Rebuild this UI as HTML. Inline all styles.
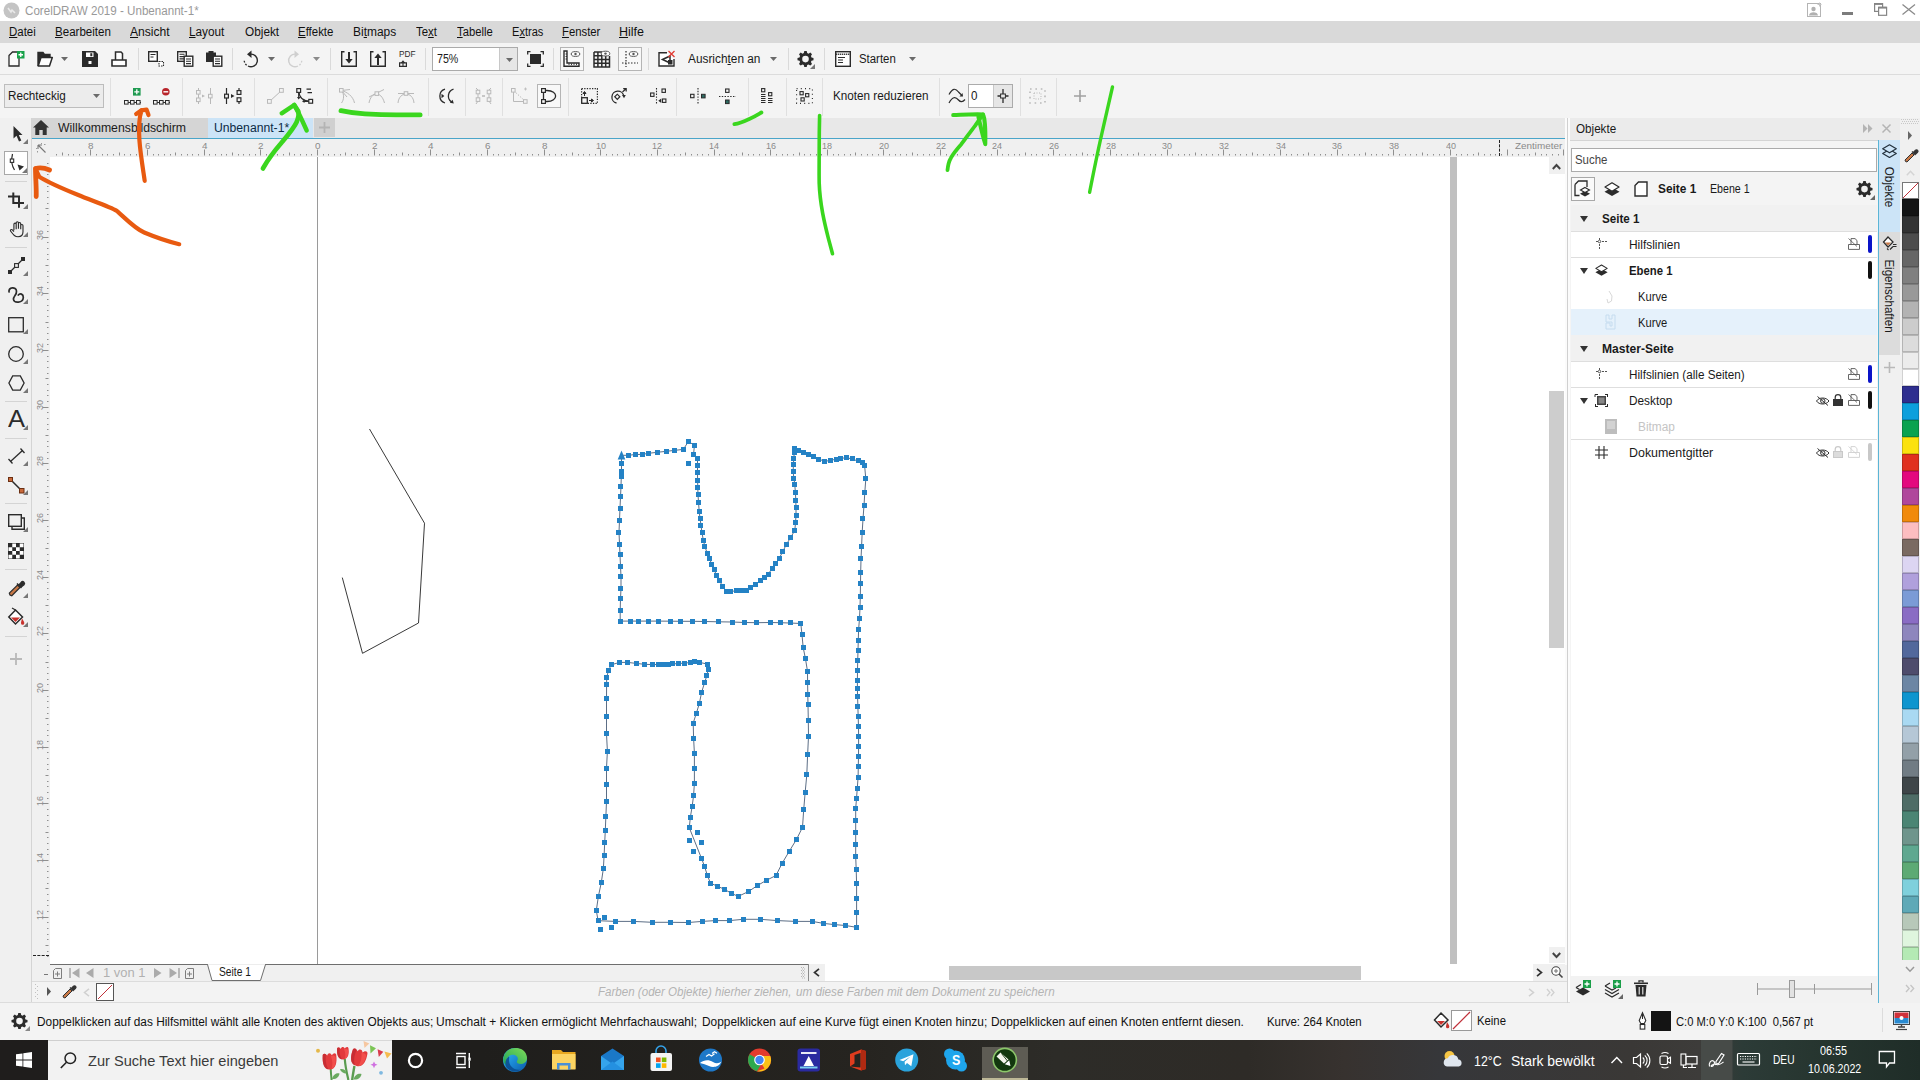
<!DOCTYPE html><html><head><meta charset="utf-8"><title>CorelDRAW 2019 - Unbenannt-1*</title><style>html,body{margin:0;padding:0;}body{width:1920px;height:1080px;overflow:hidden;position:relative;background:#f0f0f0;font-family:"Liberation Sans",sans-serif;}.a{position:absolute;}.t{position:absolute;white-space:nowrap;transform-origin:0 50%;line-height:1;}svg{position:absolute;overflow:visible;}</style></head><body>
<div class="a" style="left:0px;top:0px;width:1920px;height:21px;background:#ffffff;"></div>
<div class="a" style="left:0px;top:21px;width:1920px;height:22px;background:#d9d9d9;"></div>
<div class="a" style="left:0px;top:43px;width:1920px;height:31px;background:#f4f4f4;"></div>
<div class="a" style="left:0px;top:74px;width:1920px;height:1px;background:#dcdcdc;"></div>
<div class="a" style="left:0px;top:75px;width:1920px;height:43px;background:#f4f4f4;"></div>
<div class="a" style="left:138px;top:48px;width:1px;height:22px;background:#dadada;"></div>
<div class="a" style="left:232px;top:48px;width:1px;height:22px;background:#dadada;"></div>
<div class="a" style="left:330px;top:48px;width:1px;height:22px;background:#dadada;"></div>
<div class="a" style="left:425px;top:48px;width:1px;height:22px;background:#dadada;"></div>
<div class="a" style="left:553px;top:48px;width:1px;height:22px;background:#dadada;"></div>
<div class="a" style="left:648px;top:48px;width:1px;height:22px;background:#dadada;"></div>
<div class="a" style="left:788px;top:48px;width:1px;height:22px;background:#dadada;"></div>
<div class="a" style="left:824px;top:48px;width:1px;height:22px;background:#dadada;"></div>
<div class="a" style="left:110px;top:78px;width:1px;height:38px;background:#e0e0e0;"></div>
<div class="a" style="left:182px;top:78px;width:1px;height:38px;background:#e0e0e0;"></div>
<div class="a" style="left:254px;top:78px;width:1px;height:38px;background:#e0e0e0;"></div>
<div class="a" style="left:327px;top:78px;width:1px;height:38px;background:#e0e0e0;"></div>
<div class="a" style="left:428px;top:78px;width:1px;height:38px;background:#e0e0e0;"></div>
<div class="a" style="left:465px;top:78px;width:1px;height:38px;background:#e0e0e0;"></div>
<div class="a" style="left:502px;top:78px;width:1px;height:38px;background:#e0e0e0;"></div>
<div class="a" style="left:568px;top:78px;width:1px;height:38px;background:#e0e0e0;"></div>
<div class="a" style="left:676px;top:78px;width:1px;height:38px;background:#e0e0e0;"></div>
<div class="a" style="left:748px;top:78px;width:1px;height:38px;background:#e0e0e0;"></div>
<div class="a" style="left:786px;top:78px;width:1px;height:38px;background:#e0e0e0;"></div>
<div class="a" style="left:822px;top:78px;width:1px;height:38px;background:#e0e0e0;"></div>
<div class="a" style="left:939px;top:78px;width:1px;height:38px;background:#e0e0e0;"></div>
<div class="a" style="left:1020px;top:78px;width:1px;height:38px;background:#e0e0e0;"></div>
<div class="a" style="left:1056px;top:78px;width:1px;height:38px;background:#e0e0e0;"></div>
<div class="a" style="left:432px;top:47px;width:86px;height:24px;background:#ffffff;border:1px solid #ababab;box-sizing:border-box;"></div>
<div class="a" style="left:500px;top:48px;width:17px;height:22px;background:#e6e6e6;"></div>
<div class="a" style="left:499px;top:48px;width:1px;height:22px;background:#c8c8c8;"></div>
<div class="a" style="left:560px;top:47px;width:24px;height:24px;background:#f8f8f8;border:1px solid #b5b5b5;box-sizing:border-box;"></div>
<div class="a" style="left:618px;top:47px;width:24px;height:24px;background:#f8f8f8;border:1px solid #b5b5b5;box-sizing:border-box;"></div>
<div class="a" style="left:4px;top:84px;width:100px;height:24px;background:#ececec;border:1px solid #bdbdbd;box-sizing:border-box;"></div>
<div class="a" style="left:537px;top:84px;width:24px;height:24px;background:#f8f8f8;border:1px solid #b5b5b5;box-sizing:border-box;"></div>
<div class="a" style="left:968px;top:84px;width:45px;height:24px;background:#ffffff;border:1px solid #ababab;box-sizing:border-box;"></div>
<div class="a" style="left:994px;top:85px;width:18px;height:22px;background:#e6e6e6;"></div>
<div class="a" style="left:993px;top:85px;width:1px;height:22px;background:#c8c8c8;"></div>
<div class="a" style="left:0px;top:118px;width:31px;height:885px;background:#f0f0f0;"></div>
<div class="a" style="left:31px;top:118px;width:1px;height:885px;background:#d4d4d4;"></div>
<div class="a" style="left:4px;top:151px;width:24px;height:24px;background:#ffffff;border:1px solid #a8a8a8;box-sizing:border-box;"></div>
<div class="a" style="left:5px;top:181px;width:22px;height:1px;background:#d4d4d4;"></div>
<div class="a" style="left:5px;top:247px;width:22px;height:1px;background:#d4d4d4;"></div>
<div class="a" style="left:5px;top:401px;width:22px;height:1px;background:#d4d4d4;"></div>
<div class="a" style="left:5px;top:438px;width:22px;height:1px;background:#d4d4d4;"></div>
<div class="a" style="left:5px;top:503px;width:22px;height:1px;background:#d4d4d4;"></div>
<div class="a" style="left:5px;top:569px;width:22px;height:1px;background:#d4d4d4;"></div>
<div class="a" style="left:5px;top:636px;width:22px;height:1px;background:#d4d4d4;"></div>
<div class="a" style="left:32px;top:118px;width:1536px;height:20px;background:#e8e8e8;"></div>
<div class="a" style="left:32px;top:118px;width:176px;height:20px;background:#d5d5d5;"></div>
<div class="a" style="left:208px;top:118px;width:105px;height:20px;background:#cce4f7;"></div>
<div class="a" style="left:314px;top:118px;width:21px;height:19px;background:#d0d0d0;"></div>
<div class="a" style="left:32px;top:138px;width:1536px;height:1px;background:#4aa5c9;"></div>
<div class="a" style="left:32px;top:139px;width:1536px;height:18px;background:#f0f0f0;"></div>
<div class="a" style="left:32px;top:157px;width:18px;height:808px;background:#f0f0f0;"></div>
<div class="a" style="left:50px;top:157px;width:1499px;height:807px;background:#ffffff;"></div>
<div class="a" style="left:1549px;top:157px;width:17px;height:808px;background:#ffffff;"></div>
<div class="a" style="left:1549px;top:157px;width:16px;height:17px;background:#f0f0f0;"></div>
<div class="a" style="left:1549px;top:947px;width:16px;height:16px;background:#f0f0f0;"></div>
<div class="a" style="left:1549px;top:391px;width:15px;height:257px;background:#cdcdcd;"></div>
<div class="a" style="left:1565px;top:118px;width:6px;height:885px;background:#fbfbfb;"></div>
<div class="a" style="left:317px;top:157px;width:1px;height:807px;background:#9a9a9a;"></div>
<div class="a" style="left:1450px;top:157px;width:7px;height:807px;background:#c0c0c0;"></div>
<div class="a" style="left:32px;top:965px;width:1536px;height:16px;background:#f0f0f0;"></div>
<div class="a" style="left:50px;top:964px;width:759px;height:1px;background:#6e6e6e;"></div>
<div class="a" style="left:808px;top:964px;width:1px;height:17px;background:#8a8a8a;"></div>
<div class="a" style="left:809px;top:964px;width:16px;height:17px;background:#f0f0f0;"></div>
<div class="a" style="left:825px;top:964px;width:708px;height:17px;background:#ffffff;"></div>
<div class="a" style="left:949px;top:966px;width:412px;height:14px;background:#c8c8c8;"></div>
<div class="a" style="left:1533px;top:964px;width:32px;height:17px;background:#f0f0f0;"></div>
<div class="a" style="left:32px;top:981px;width:1536px;height:22px;background:#f3f3f3;"></div>
<div class="a" style="left:32px;top:981px;width:1536px;height:1px;background:#dcdcdc;"></div>
<div class="a" style="left:96px;top:983px;width:18px;height:18px;background:#ffffff;border:1px solid #555;box-sizing:border-box;"></div>
<div class="a" style="left:0px;top:1003px;width:1920px;height:37px;background:#f3f3f3;"></div>
<div class="a" style="left:0px;top:1002px;width:1920px;height:1px;background:#dcdcdc;"></div>
<div class="a" style="left:1651px;top:1011px;width:20px;height:20px;background:#141414;"></div>
<div class="a" style="left:1451px;top:1010px;width:21px;height:21px;background:#ffffff;border:1px solid #999;box-sizing:border-box;"></div>
<div class="a" style="left:1882px;top:1008px;width:1px;height:24px;background:#dcdcdc;"></div>
<div class="a" style="left:1570px;top:118px;width:330px;height:22px;background:#ebebeb;"></div>
<div class="a" style="left:1570px;top:140px;width:308px;height:1px;background:#d4d4d4;"></div>
<div class="a" style="left:1567px;top:118px;width:1px;height:885px;background:#d0d0d0;"></div>
<div class="a" style="left:1570px;top:141px;width:308px;height:862px;background:#f4f4f4;"></div>
<div class="a" style="left:1571px;top:148px;width:306px;height:24px;background:#ffffff;border:1px solid #ababab;box-sizing:border-box;"></div>
<div class="a" style="left:1571px;top:177px;width:24px;height:24px;background:#fafafa;border:1px solid #a8a8a8;box-sizing:border-box;"></div>
<div class="a" style="left:1571px;top:205px;width:306px;height:771px;background:#ffffff;"></div>
<div class="a" style="left:1571px;top:205px;width:306px;height:26px;background:#f1f1f1;"></div>
<div class="a" style="left:1571px;top:335px;width:306px;height:26px;background:#f1f1f1;"></div>
<div class="a" style="left:1571px;top:309px;width:306px;height:26px;background:#e5f1fb;"></div>
<div class="a" style="left:1571px;top:231px;width:306px;height:1px;background:#dedede;"></div>
<div class="a" style="left:1571px;top:257px;width:306px;height:1px;background:#dedede;"></div>
<div class="a" style="left:1571px;top:361px;width:306px;height:1px;background:#dedede;"></div>
<div class="a" style="left:1571px;top:387px;width:306px;height:1px;background:#dedede;"></div>
<div class="a" style="left:1571px;top:439px;width:306px;height:1px;background:#dedede;"></div>
<div class="a" style="left:1570px;top:976px;width:308px;height:27px;background:#f2f2f2;"></div>
<div class="a" style="left:1878px;top:140px;width:22px;height:863px;background:#f0f0f0;"></div>
<div class="a" style="left:1879px;top:140px;width:21px;height:92px;background:#cce4f7;"></div>
<div class="a" style="left:1879px;top:232px;width:21px;height:123px;background:#dcdcdc;"></div>
<div class="a" style="left:1878px;top:140px;width:1px;height:863px;background:#5bb5d6;"></div>
<div class="a" style="left:1900px;top:118px;width:20px;height:885px;background:#f0f0f0;"></div>
<div class="a" style="left:1902px;top:182px;width:17px;height:17px;background:#ffffff;border:1px solid #777;box-sizing:border-box;"></div>
<div class="a" style="left:1902px;top:199px;width:17px;height:17px;background:#141414;border:1px solid rgba(0,0,0,0.18);box-sizing:border-box;"></div>
<div class="a" style="left:1902px;top:216px;width:17px;height:17px;background:#333333;border:1px solid rgba(0,0,0,0.18);box-sizing:border-box;"></div>
<div class="a" style="left:1902px;top:233px;width:17px;height:17px;background:#4d4d4d;border:1px solid rgba(0,0,0,0.18);box-sizing:border-box;"></div>
<div class="a" style="left:1902px;top:250px;width:17px;height:17px;background:#666666;border:1px solid rgba(0,0,0,0.18);box-sizing:border-box;"></div>
<div class="a" style="left:1902px;top:267px;width:17px;height:17px;background:#808080;border:1px solid rgba(0,0,0,0.18);box-sizing:border-box;"></div>
<div class="a" style="left:1902px;top:284px;width:17px;height:17px;background:#999999;border:1px solid rgba(0,0,0,0.18);box-sizing:border-box;"></div>
<div class="a" style="left:1902px;top:301px;width:17px;height:17px;background:#b3b3b3;border:1px solid rgba(0,0,0,0.18);box-sizing:border-box;"></div>
<div class="a" style="left:1902px;top:318px;width:17px;height:17px;background:#cccccc;border:1px solid rgba(0,0,0,0.18);box-sizing:border-box;"></div>
<div class="a" style="left:1902px;top:335px;width:17px;height:17px;background:#dcdcdc;border:1px solid rgba(0,0,0,0.18);box-sizing:border-box;"></div>
<div class="a" style="left:1902px;top:352px;width:17px;height:17px;background:#ececec;border:1px solid rgba(0,0,0,0.18);box-sizing:border-box;"></div>
<div class="a" style="left:1902px;top:369px;width:17px;height:17px;background:#ffffff;border:1px solid rgba(0,0,0,0.18);box-sizing:border-box;"></div>
<div class="a" style="left:1902px;top:386px;width:17px;height:17px;background:#2e2e8f;border:1px solid rgba(0,0,0,0.18);box-sizing:border-box;"></div>
<div class="a" style="left:1902px;top:403px;width:17px;height:17px;background:#0c9fdc;border:1px solid rgba(0,0,0,0.18);box-sizing:border-box;"></div>
<div class="a" style="left:1902px;top:420px;width:17px;height:17px;background:#0aa24f;border:1px solid rgba(0,0,0,0.18);box-sizing:border-box;"></div>
<div class="a" style="left:1902px;top:437px;width:17px;height:17px;background:#fbe20e;border:1px solid rgba(0,0,0,0.18);box-sizing:border-box;"></div>
<div class="a" style="left:1902px;top:454px;width:17px;height:17px;background:#e0311f;border:1px solid rgba(0,0,0,0.18);box-sizing:border-box;"></div>
<div class="a" style="left:1902px;top:471px;width:17px;height:17px;background:#e3087e;border:1px solid rgba(0,0,0,0.18);box-sizing:border-box;"></div>
<div class="a" style="left:1902px;top:488px;width:17px;height:17px;background:#b0479c;border:1px solid rgba(0,0,0,0.18);box-sizing:border-box;"></div>
<div class="a" style="left:1902px;top:505px;width:17px;height:17px;background:#f18a0b;border:1px solid rgba(0,0,0,0.18);box-sizing:border-box;"></div>
<div class="a" style="left:1902px;top:522px;width:17px;height:17px;background:#fcbdc0;border:1px solid rgba(0,0,0,0.18);box-sizing:border-box;"></div>
<div class="a" style="left:1902px;top:539px;width:17px;height:17px;background:#7a6a62;border:1px solid rgba(0,0,0,0.18);box-sizing:border-box;"></div>
<div class="a" style="left:1902px;top:556px;width:17px;height:17px;background:#dcd5f2;border:1px solid rgba(0,0,0,0.18);box-sizing:border-box;"></div>
<div class="a" style="left:1902px;top:573px;width:17px;height:17px;background:#b0a0dc;border:1px solid rgba(0,0,0,0.18);box-sizing:border-box;"></div>
<div class="a" style="left:1902px;top:590px;width:17px;height:17px;background:#7b9bd6;border:1px solid rgba(0,0,0,0.18);box-sizing:border-box;"></div>
<div class="a" style="left:1902px;top:607px;width:17px;height:17px;background:#8a6cc4;border:1px solid rgba(0,0,0,0.18);box-sizing:border-box;"></div>
<div class="a" style="left:1902px;top:624px;width:17px;height:17px;background:#8e86bd;border:1px solid rgba(0,0,0,0.18);box-sizing:border-box;"></div>
<div class="a" style="left:1902px;top:641px;width:17px;height:17px;background:#52689c;border:1px solid rgba(0,0,0,0.18);box-sizing:border-box;"></div>
<div class="a" style="left:1902px;top:658px;width:17px;height:17px;background:#4e4c6c;border:1px solid rgba(0,0,0,0.18);box-sizing:border-box;"></div>
<div class="a" style="left:1902px;top:675px;width:17px;height:17px;background:#6c86a4;border:1px solid rgba(0,0,0,0.18);box-sizing:border-box;"></div>
<div class="a" style="left:1902px;top:692px;width:17px;height:17px;background:#0e95cf;border:1px solid rgba(0,0,0,0.18);box-sizing:border-box;"></div>
<div class="a" style="left:1902px;top:709px;width:17px;height:17px;background:#a9d9f2;border:1px solid rgba(0,0,0,0.18);box-sizing:border-box;"></div>
<div class="a" style="left:1902px;top:726px;width:17px;height:17px;background:#b5c7d6;border:1px solid rgba(0,0,0,0.18);box-sizing:border-box;"></div>
<div class="a" style="left:1902px;top:743px;width:17px;height:17px;background:#93a0a8;border:1px solid rgba(0,0,0,0.18);box-sizing:border-box;"></div>
<div class="a" style="left:1902px;top:760px;width:17px;height:17px;background:#717c84;border:1px solid rgba(0,0,0,0.18);box-sizing:border-box;"></div>
<div class="a" style="left:1902px;top:777px;width:17px;height:17px;background:#3e4548;border:1px solid rgba(0,0,0,0.18);box-sizing:border-box;"></div>
<div class="a" style="left:1902px;top:794px;width:17px;height:17px;background:#4e6c66;border:1px solid rgba(0,0,0,0.18);box-sizing:border-box;"></div>
<div class="a" style="left:1902px;top:811px;width:17px;height:17px;background:#4b8574;border:1px solid rgba(0,0,0,0.18);box-sizing:border-box;"></div>
<div class="a" style="left:1902px;top:828px;width:17px;height:17px;background:#6f958c;border:1px solid rgba(0,0,0,0.18);box-sizing:border-box;"></div>
<div class="a" style="left:1902px;top:845px;width:17px;height:17px;background:#5fa890;border:1px solid rgba(0,0,0,0.18);box-sizing:border-box;"></div>
<div class="a" style="left:1902px;top:862px;width:17px;height:17px;background:#5daa74;border:1px solid rgba(0,0,0,0.18);box-sizing:border-box;"></div>
<div class="a" style="left:1902px;top:879px;width:17px;height:17px;background:#7fd0dc;border:1px solid rgba(0,0,0,0.18);box-sizing:border-box;"></div>
<div class="a" style="left:1902px;top:896px;width:17px;height:17px;background:#5fa9b7;border:1px solid rgba(0,0,0,0.18);box-sizing:border-box;"></div>
<div class="a" style="left:1902px;top:913px;width:17px;height:17px;background:#b7c8b9;border:1px solid rgba(0,0,0,0.18);box-sizing:border-box;"></div>
<div class="a" style="left:1902px;top:930px;width:17px;height:17px;background:#dff5de;border:1px solid rgba(0,0,0,0.18);box-sizing:border-box;"></div>
<div class="a" style="left:1902px;top:947px;width:17px;height:17px;background:#b4eab4;border:1px solid rgba(0,0,0,0.18);box-sizing:border-box;"></div>
<svg style="left:3px;top:2px" width="17" height="17" viewBox="0 0 17 17"><circle cx="8.5" cy="8.5" r="8" fill="#c4c4c4"/><path d="M5 6l3 4 1-2 3 3" stroke="#e9e9e9" stroke-width="1.6" fill="none"/></svg>
<svg style="left:1807px;top:2px" width="16" height="15" viewBox="0 0 16 15"><rect x=".5" y="1.5" width="13" height="13" fill="#fff" stroke="#b4b4b4"/><circle cx="6.5" cy="7" r="2.2" fill="#b0b0b0"/><path d="M2 13.5c0-4.5 9-4.5 9 0z" fill="#b0b0b0"/><path d="M10.5 2.5h4M12.5 .5v4" stroke="#c4c4c4"/></svg>
<div class="a" style="left:1842px;top:12px;width:11px;height:3px;background:#7c7c7c;"></div>
<svg style="left:1874px;top:3px" width="14" height="13" viewBox="0 0 14 13"><rect x=".6" y=".6" width="8" height="7.8" fill="#fff" stroke="#858585" stroke-width="1.2"/><path d="M.6 1h8" stroke="#858585" stroke-width="1.8"/><rect x="4.6" y="4.3" width="8" height="8" fill="#fff" stroke="#858585" stroke-width="1.2"/><path d="M4.6 4.7h8" stroke="#858585" stroke-width="1.8"/></svg>
<svg style="left:1902px;top:4px" width="13" height="11" viewBox="0 0 13 11"><path d="M.5 .5l12.5 10M13 .5L.5 10.5" stroke="#8a8a8a" stroke-width="1.3"/></svg>
<svg style="left:8px;top:51px" width="17" height="16" viewBox="0 0 17 16"><path d="M1 4.5L4.5 1H11V15H1Z" fill="#fbfbfb" stroke="#2b2b2b" stroke-width="1.3"/><rect x="9" y="0" width="7.5" height="7.5" fill="#19a24a"/><path d="M12.75 1.5v4.5M10.5 3.75h4.5" stroke="#fff" stroke-width="1.3"/></svg>
<svg style="left:37px;top:51px" width="16" height="16" viewBox="0 0 16 16"><path d="M1 15V1.5H6L7.5 3.5H13V6" fill="#2b2b2b" stroke="#2b2b2b" stroke-width="1.4"/><path d="M1.2 15L4 6.5H15.3L12.5 15Z" fill="#fff" stroke="#2b2b2b" stroke-width="1.5" stroke-linejoin="round"/></svg>
<svg style="left:61.0px;top:57.3px" width="7" height="4" viewBox="0 0 7 4"><path d="M0 0H7L3.5 4Z" fill="#6a6a6a"/></svg>
<svg style="left:82px;top:51px" width="16" height="16" viewBox="0 0 16 16"><path d="M0 0H13L16 3V16H0Z" fill="#2b2b2b"/><rect x="4" y="1.5" width="7.5" height="4.5" fill="#fff"/><rect x="8.3" y="2.2" width="2" height="3" fill="#2b2b2b"/><rect x="6.5" y="10" width="3" height="3" fill="#fff"/></svg>
<svg style="left:111px;top:51px" width="16" height="16" viewBox="0 0 16 16"><path d="M4.5 9V1H10L11.5 2.5V9" fill="#fff" stroke="#2b2b2b" stroke-width="1.5"/><path d="M1 15V9H15V15Z" fill="#fff" stroke="#2b2b2b" stroke-width="1.6"/></svg>
<svg style="left:148px;top:51px" width="17" height="16" viewBox="0 0 17 16"><rect x=".7" y=".7" width="8.6" height="9.6" fill="#fff" stroke="#2b2b2b" stroke-width="1.4"/><path d="M2.5 3.5h5M2.5 6h3" stroke="#2b2b2b" stroke-width="1.2"/><path d="M11 10.5h4.5v4.5H11z" fill="#fff" stroke="#2b2b2b" stroke-width="1.1" stroke-dasharray="1.5 1"/></svg>
<svg style="left:177px;top:51px" width="17" height="16" viewBox="0 0 17 16"><rect x=".7" y=".7" width="8.6" height="9.6" fill="#fff" stroke="#2b2b2b" stroke-width="1.4"/><path d="M2.5 3.3h5M2.5 5.6h5M2.5 7.9h5" stroke="#2b2b2b" stroke-width="1.1"/><rect x="7.2" y="5.2" width="8.6" height="10" fill="#fff" stroke="#2b2b2b" stroke-width="1.4"/><path d="M9 8h5M9 10.3h5M9 12.6h5" stroke="#2b2b2b" stroke-width="1.1"/></svg>
<svg style="left:206px;top:51px" width="17" height="16" viewBox="0 0 17 16"><path d="M0 1.5H2.5V0H7.5V1.5H10V11H0Z" fill="#2b2b2b"/><rect x="7.2" y="5.2" width="8.6" height="10" fill="#fff" stroke="#2b2b2b" stroke-width="1.4"/><path d="M9 8h5M9 10.3h5M9 12.6h5" stroke="#2b2b2b" stroke-width="1.1"/></svg>
<svg style="left:242px;top:50px" width="17" height="18" viewBox="0 0 17 18"><path d="M8.5 4.2A6.3 6.3 0 1 1 6 16" fill="none" stroke="#2b2b2b" stroke-width="1.4"/><path d="M4.6 15.2A6.3 6.3 0 0 1 2.3 9.3" fill="none" stroke="#2b2b2b" stroke-width="1.3" stroke-dasharray="1.8 1.5"/><path d="M9.5 0.5L5 4.3L9.5 8Z" fill="#2b2b2b"/></svg>
<svg style="left:267.5px;top:57.3px" width="7" height="4" viewBox="0 0 7 4"><path d="M0 0H7L3.5 4Z" fill="#6a6a6a"/></svg>
<svg style="left:287px;top:50px" width="17" height="18" viewBox="0 0 17 18"><path d="M8.5 4.2A6.3 6.3 0 1 0 11 16" fill="none" stroke="#cfcfcf" stroke-width="1.4"/><path d="M12.4 15.2A6.3 6.3 0 0 0 14.7 9.3" fill="none" stroke="#cfcfcf" stroke-width="1.3" stroke-dasharray="1.8 1.5"/><path d="M7.5 0.5L12 4.3L7.5 8Z" fill="#cfcfcf"/></svg>
<svg style="left:312.5px;top:57.3px" width="7" height="4" viewBox="0 0 7 4"><path d="M0 0H7L3.5 4Z" fill="#8a8a8a"/></svg>
<svg style="left:341px;top:51px" width="16" height="16" viewBox="0 0 16 16"><path d="M3.5 .7H.7V15.3H15.3V.7H12.5" fill="none" stroke="#2b2b2b" stroke-width="1.4"/><path d="M8 1V10" stroke="#2b2b2b" stroke-width="2"/><path d="M4.3 8L8 12.5L11.7 8Z" fill="#2b2b2b"/></svg>
<svg style="left:370px;top:51px" width="16" height="16" viewBox="0 0 16 16"><path d="M3.5 .7H.7V15.3H15.3V.7H12.5" fill="none" stroke="#2b2b2b" stroke-width="1.4"/><path d="M8 5V14" stroke="#2b2b2b" stroke-width="2"/><path d="M4.3 7L8 2.5L11.7 7Z" fill="#2b2b2b"/></svg>
<svg style="left:399px;top:60px" width="8" height="7" viewBox="0 0 8 7"><path d="M.6 6.4V2.8H7.4V6.4Z" fill="none" stroke="#2b2b2b" stroke-width="1.2"/><path d="M4 6V1.5M2.3 3L4 1L5.7 3" stroke="#2b2b2b" stroke-width="1.1" fill="none"/></svg>
<svg style="left:505.5px;top:57.5px" width="7" height="4" viewBox="0 0 7 4"><path d="M0 0H7L3.5 4Z" fill="#6a6a6a"/></svg>
<svg style="left:527px;top:51px" width="17" height="16" viewBox="0 0 17 16"><rect x="3" y="3" width="11" height="10" fill="#2b2b2b"/><path d="M.7 3.5V.7H3.5M13.5 .7H16.3V3.5M16.3 12.5V15.3H13.5M3.5 15.3H.7V12.5" fill="none" stroke="#2b2b2b" stroke-width="1.3"/></svg>
<svg style="left:563px;top:50px" width="18" height="18" viewBox="0 0 18 18"><path d="M1 1H4V13H16V16.3H1Z" fill="#fff" stroke="#2b2b2b" stroke-width="1.4"/><path d="M6 13.5v1.5M8.5 13.5v1.5M11 13.5v1.5M13.5 13.5v1.5M2.5 4h1.5M2.5 6.5h1.5M2.5 9h1.5" stroke="#2b2b2b" stroke-width=".9"/><ellipse cx="12.5" cy="4" rx="4.3" ry="2.4" fill="#fff" stroke="#555" stroke-width="1"/><circle cx="12.5" cy="4" r="1.2" fill="#555"/></svg>
<svg style="left:593px;top:50px" width="18" height="18" viewBox="0 0 18 18"><path d="M1 2V17H16.5V6M4.9 2V17M8.8 2V17M12.7 6V17M1 5.75H9M1 9.5H16.5M1 13.25H16.5M1 2H9" fill="none" stroke="#2b2b2b" stroke-width="1.5"/><ellipse cx="12.5" cy="3.6" rx="4.3" ry="2.4" fill="#fff" stroke="#555" stroke-width="1"/><circle cx="12.5" cy="3.6" r="1.2" fill="#555"/></svg>
<svg style="left:621px;top:50px" width="18" height="18" viewBox="0 0 18 18"><path d="M5 1V17M1 13H17" fill="none" stroke="#2b2b2b" stroke-width="1.2" stroke-dasharray="1.5 1.5"/><ellipse cx="12.5" cy="4" rx="4.3" ry="2.4" fill="#fff" stroke="#555" stroke-width="1"/><circle cx="12.5" cy="4" r="1.2" fill="#555"/></svg>
<svg style="left:658px;top:50px" width="18" height="17" viewBox="0 0 18 17"><path d="M9 2.7H1V16H16V9" fill="#fff" stroke="#2b2b2b" stroke-width="1.4"/><path d="M4.5 9.5L12 6V13Z" fill="none" stroke="#2b2b2b" stroke-width="1.5"/><rect x="10" y="10" width="4.5" height="4.5" fill="#2b2b2b"/><path d="M10.5 1l6 6M16.5 1l-6 6" stroke="#e23b33" stroke-width="1.3"/></svg>
<svg style="left:769.5px;top:57.3px" width="7" height="4" viewBox="0 0 7 4"><path d="M0 0H7L3.5 4Z" fill="#6a6a6a"/></svg>
<svg style="left:797px;top:51px" width="17" height="17" viewBox="0 0 17 17"><path d="M8.5 0l1.2.1.5 2 1.3.55L13.3 1.6l1.7 1.7-1.05 1.8.55 1.3 2 .5v2.4l-2 .5-.55 1.3 1.05 1.8-1.7 1.7-1.8-1.05-1.3.55-.5 2H7.3l-.5-2-1.3-.55-1.8 1.05-1.7-1.7 1.05-1.8L2.5 9.8l-2-.5V6.9l2-.5.55-1.3L2 3.3l1.7-1.7 1.8 1.05 1.3-.55.5-2z" fill="#2b2b2b"/><circle cx="8.5" cy="8.1" r="3.3" fill="#f4f4f4"/></svg>
<svg style="left:810px;top:64px" width="5" height="5" viewBox="0 0 5 5"><path d="M5 0V5H0Z" fill="#777"/></svg>
<svg style="left:835px;top:51px" width="16" height="16" viewBox="0 0 16 16"><rect x=".7" y=".7" width="14.6" height="14.6" fill="#fff" stroke="#2b2b2b" stroke-width="1.4"/><path d="M.7 3.2H15.3" stroke="#2b2b2b" stroke-width="1.6" stroke-dasharray="1.2 .8" /><path d="M3 6.5h7M3 9h5M3 11.5h5" stroke="#2b2b2b" stroke-width="1.1"/></svg>
<svg style="left:908.5px;top:57.3px" width="7" height="4" viewBox="0 0 7 4"><path d="M0 0H7L3.5 4Z" fill="#6a6a6a"/></svg>
<svg style="left:92.8px;top:94.0px" width="7" height="4" viewBox="0 0 7 4"><path d="M0 0H7L3.5 4Z" fill="#6a6a6a"/></svg>
<svg style="left:124px;top:99.5px" width="17" height="5" viewBox="0 0 17 5"><path d="M0 2.5H17" stroke="#2b2b2b" stroke-width="1"/><rect x=".5" y=".5" width="3.6" height="3.6" fill="#f3f3f3" stroke="#2b2b2b" stroke-width="1"/><rect x="6.5" y=".5" width="3.6" height="3.6" fill="#f3f3f3" stroke="#2b2b2b" stroke-width="1"/><rect x="12.5" y=".5" width="3.6" height="3.6" fill="#f3f3f3" stroke="#2b2b2b" stroke-width="1"/></svg>
<svg style="left:133px;top:88px" width="8" height="8" viewBox="0 0 8 8"><rect width="7.6" height="7.6" fill="#1f9a50"/><path d="M3.8 1.3v5M1.3 3.8h5" stroke="#fff" stroke-width="1.3"/></svg>
<svg style="left:153px;top:99.5px" width="17" height="5" viewBox="0 0 17 5"><path d="M0 2.5H17" stroke="#2b2b2b" stroke-width="1"/><rect x=".5" y=".5" width="3.6" height="3.6" fill="#f3f3f3" stroke="#2b2b2b" stroke-width="1"/><rect x="6.5" y=".5" width="3.6" height="3.6" fill="#f3f3f3" stroke="#2b2b2b" stroke-width="1"/><rect x="12.5" y=".5" width="3.6" height="3.6" fill="#f3f3f3" stroke="#2b2b2b" stroke-width="1"/></svg>
<svg style="left:161.5px;top:88px" width="8" height="8" viewBox="0 0 8 8"><circle cx="3.8" cy="3.8" r="3.8" fill="#b8242a"/><path d="M1.4 3.8h4.8" stroke="#fff" stroke-width="1.4"/></svg>
<svg style="left:196px;top:88px" width="17" height="16" viewBox="0 0 17 16"><path d="M2.5 0V16M14.5 0V16" stroke="#b9b9b9" stroke-width="1"/><rect x=".5" y="2.5" width="3.6" height="3.6" fill="#f3f3f3" stroke="#b9b9b9"/><rect x=".5" y="10" width="3.6" height="3.6" fill="#f3f3f3" stroke="#b9b9b9"/><rect x="12.5" y="6.3" width="3.6" height="3.6" fill="#f3f3f3" stroke="#b9b9b9"/><path d="M6 6.5L9 8L6 9.5Z" fill="#b9b9b9"/></svg>
<svg style="left:224px;top:88px" width="18" height="16" viewBox="0 0 18 16"><path d="M2.5 0V16" stroke="#2b2b2b" stroke-width="1.2"/><rect x=".6" y="6.2" width="3.8" height="3.8" fill="#f3f3f3" stroke="#2b2b2b" stroke-width="1.2"/><path d="M7 6L10.5 8L7 10Z" fill="#2b2b2b"/><path d="M15 0V3M15 13.5V16" stroke="#2b2b2b" stroke-width="1.2"/><rect x="13.1" y="2.6" width="3.8" height="3.8" fill="#f3f3f3" stroke="#2b2b2b" stroke-width="1.2"/><rect x="13.1" y="9.8" width="3.8" height="3.8" fill="#f3f3f3" stroke="#2b2b2b" stroke-width="1.2"/></svg>
<svg style="left:267px;top:88px" width="17" height="16" viewBox="0 0 17 16"><path d="M2.5 13.5L14.5 2.5" stroke="#b9b9b9" stroke-width="1"/><rect x=".5" y="11.5" width="3.8" height="3.8" fill="#f3f3f3" stroke="#b9b9b9"/><rect x="12.5" y=".5" width="3.8" height="3.8" fill="#f3f3f3" stroke="#b9b9b9"/></svg>
<svg style="left:296px;top:88px" width="18" height="16" viewBox="0 0 18 16"><path d="M2.7 2.5C3 9 7 13.3 14.5 13.3" fill="none" stroke="#2b2b2b" stroke-width="1.2"/><path d="M2.7 4.5V10.5M8 13.3H13" stroke="#2b2b2b" stroke-width="1.2"/><path d="M1 9L2.7 11.5L4.4 9Z M8.5 11.6L6 13.3L8.5 15Z" fill="#2b2b2b"/><rect x=".8" y=".6" width="3.8" height="3.8" fill="#f3f3f3" stroke="#2b2b2b" stroke-width="1.2"/><rect x="12.8" y="11.4" width="3.8" height="3.8" fill="#f3f3f3" stroke="#2b2b2b" stroke-width="1.2"/><path d="M10.5 1.2h4.5M11.5 4.6h4.5" stroke="#2b2b2b" stroke-width="1.2"/></svg>
<svg style="left:339px;top:88px" width="18" height="16" viewBox="0 0 18 16"><path d="M2.5 15C5 12 5.5 6 2.5 2.5M2.5 2.5C8 4 14 8 15.5 15" fill="none" stroke="#b9b9b9"/><path d="M2.5 2.5L11 1.5M2.5 2.5L8 9" stroke="#b9b9b9"/><rect x=".5" y=".5" width="3.6" height="3.6" fill="#f3f3f3" stroke="#b9b9b9"/></svg>
<svg style="left:368px;top:88px" width="18" height="16" viewBox="0 0 18 16"><path d="M1 15C3 4 13 2 16.5 15" fill="none" stroke="#b9b9b9"/><path d="M1 9L16 1.5" stroke="#b9b9b9"/><rect x="7" y="3.8" width="3.6" height="3.6" fill="#f3f3f3" stroke="#b9b9b9"/></svg>
<svg style="left:397px;top:88px" width="18" height="16" viewBox="0 0 18 16"><path d="M1 15C2 3 16 3 17 15" fill="none" stroke="#b9b9b9"/><path d="M1 5.5H17" stroke="#b9b9b9"/><rect x="7.2" y="3.7" width="3.6" height="3.6" fill="#f3f3f3" stroke="#b9b9b9"/></svg>
<svg style="left:437px;top:88px" width="18" height="16" viewBox="0 0 18 16"><path d="M8 1.2A7.2 7.2 0 0 0 8 15" fill="none" stroke="#2b2b2b" stroke-width="1.3"/><path d="M16.5 1.2A7.2 7.2 0 0 0 14.5 14" fill="none" stroke="#2b2b2b" stroke-width="1.3"/><path d="M4.5 5.8L7.3 8L4.5 10.2Z" fill="#2b2b2b"/><path d="M12.8 14.8L16.8 15.6L15.6 11.8Z" fill="#2b2b2b"/></svg>
<svg style="left:475px;top:88px" width="17" height="16" viewBox="0 0 17 16"><path d="M3 2V13M14 2V13M3 2L1 0M14 2L16 0M3 13L1 16M14 13L16 16" stroke="#b9b9b9"/><rect x="1.2" y="2.2" width="3.6" height="3.6" fill="#f3f3f3" stroke="#b9b9b9"/><rect x="1.2" y="9.8" width="3.6" height="3.6" fill="#f3f3f3" stroke="#b9b9b9"/><rect x="12.2" y="2.2" width="3.6" height="3.6" fill="#f3f3f3" stroke="#b9b9b9"/><rect x="12.2" y="9.8" width="3.6" height="3.6" fill="#f3f3f3" stroke="#b9b9b9"/><path d="M7 8h3" stroke="#b9b9b9" stroke-width="1.5"/></svg>
<svg style="left:511px;top:88px" width="17" height="16" viewBox="0 0 17 16"><path d="M2.5 2.5V13.5H14.5" fill="none" stroke="#b9b9b9"/><path d="M2.5 2.5L14.5 13.5" stroke="#b9b9b9" stroke-dasharray="1.5 1.5"/><rect x=".5" y=".5" width="3.6" height="3.6" fill="#f3f3f3" stroke="#b9b9b9"/><rect x="12.5" y="11.7" width="3.6" height="3.6" fill="#f3f3f3" stroke="#b9b9b9"/><path d="M13 1h3M14.5 -.5v3" stroke="#b9b9b9" stroke-width=".8"/></svg>
<svg style="left:541px;top:88px" width="16" height="16" viewBox="0 0 16 16"><path d="M2.5 2.5H6C17.5 2.5 17.5 13.5 6 13.5H2.5Z" fill="none" stroke="#2b2b2b" stroke-width="1.3"/><rect x=".6" y=".6" width="3.8" height="3.8" fill="#f8f8f8" stroke="#2b2b2b" stroke-width="1.2"/><rect x=".6" y="11.6" width="3.8" height="3.8" fill="#f8f8f8" stroke="#2b2b2b" stroke-width="1.2"/></svg>
<svg style="left:581px;top:88px" width="17" height="16" viewBox="0 0 17 16"><rect x=".6" y=".6" width="15.8" height="14.8" fill="none" stroke="#2b2b2b" stroke-width="1.2" stroke-dasharray="1.3 1.3"/><rect x=".7" y="9.7" width="5.6" height="5.6" fill="#f3f3f3" stroke="#2b2b2b" stroke-width="1.3"/><path d="M3.5 8V4.5M2 5.5L3.5 3.5L5 5.5Z" stroke="#2b2b2b" stroke-width="1" fill="#2b2b2b"/><path d="M8 12.5H11.5M10.5 11L12.5 12.5L10.5 14Z" stroke="#2b2b2b" stroke-width="1" fill="#2b2b2b"/></svg>
<svg style="left:610px;top:88px" width="17" height="16" viewBox="0 0 17 16"><path d="M6.5 15A6 6 0 1 1 13.8 8" fill="none" stroke="#2b2b2b" stroke-width="1.3"/><path d="M12 7L14 10.3L15.8 7Z" fill="#2b2b2b"/><rect x="5.5" y="7" width="3.6" height="3.6" transform="rotate(45 7.3 8.8)" fill="#f3f3f3" stroke="#2b2b2b" stroke-width="1.2"/><path d="M12.5 4L16 .8M13.2 .6H16.2V3.6" fill="none" stroke="#2b2b2b" stroke-width="1.2"/></svg>
<svg style="left:650px;top:88px" width="17" height="16" viewBox="0 0 17 16"><path d="M6.5 0V16" stroke="#2b2b2b" stroke-width="1.1" stroke-dasharray="1.4 1.4"/><rect x=".6" y="5" width="3.4" height="3.4" fill="#f3f3f3" stroke="#2b2b2b" stroke-width="1.1"/><rect x="12" y="1" width="3.4" height="3.4" fill="#f3f3f3" stroke="#2b2b2b" stroke-width="1.1"/><rect x="12.5" y="11" width="3.4" height="3.4" fill="#f3f3f3" stroke="#2b2b2b" stroke-width="1.1"/><path d="M11.3 10.5L8.3 12.7L11.3 14.9Z" fill="#2b2b2b"/></svg>
<svg style="left:690px;top:88px" width="16" height="16" viewBox="0 0 16 16"><path d="M8 0V16" stroke="#2b2b2b" stroke-width="1.1" stroke-dasharray="1.4 1.4"/><rect x=".6" y="6.3" width="3.4" height="3.4" fill="#f3f3f3" stroke="#2b2b2b" stroke-width="1.1"/><rect x="11.5" y="6.3" width="3.6" height="3.6" fill="#2d6b62" stroke="#2b2b2b" stroke-width="1"/></svg>
<svg style="left:719px;top:88px" width="17" height="16" viewBox="0 0 17 16"><path d="M0 8.5H17" stroke="#2b2b2b" stroke-width="1.1" stroke-dasharray="1.4 1.4"/><rect x="6.6" y="1" width="3.4" height="3.4" fill="#f3f3f3" stroke="#2b2b2b" stroke-width="1.1"/><rect x="6.5" y="12" width="3.6" height="3.6" fill="#2d6b62" stroke="#2b2b2b" stroke-width="1"/></svg>
<svg style="left:761px;top:88px" width="12" height="16" viewBox="0 0 12 16"><rect x=".6" y=".6" width="3.2" height="3.2" fill="#f3f3f3" stroke="#2b2b2b" stroke-width="1.1"/><rect x="7.6" y="4.6" width="3.2" height="3.2" fill="#f3f3f3" stroke="#2b2b2b" stroke-width="1.1"/><path d="M0 6.5H4.5M0 8.5H4.5M0 10.5H4.5M0 12.5H4.5M0 14.5H4.5M7 10.5H11.5M7 12.5H11.5M7 14.5H11.5" stroke="#2b2b2b" stroke-width="1.1"/></svg>
<svg style="left:796px;top:88px" width="17" height="16" viewBox="0 0 17 16"><rect x=".6" y=".6" width="15.8" height="14.8" fill="none" stroke="#2b2b2b" stroke-width="1.1" stroke-dasharray="1 3.2"/><rect x="4" y="3.6" width="3.2" height="3.2" fill="#f3f3f3" stroke="#2b2b2b" stroke-width="1.1"/><rect x="9.6" y="5.6" width="3.2" height="3.2" fill="#f3f3f3" stroke="#2b2b2b" stroke-width="1.1"/><rect x="5" y="9.8" width="3.2" height="3.2" fill="#f3f3f3" stroke="#2b2b2b" stroke-width="1.1"/></svg>
<svg style="left:948px;top:88px" width="18" height="16" viewBox="0 0 18 16"><path d="M1 6.5C4.5 0 7.5 0 10.5 4L13.5 7" fill="none" stroke="#2b2b2b" stroke-width="1.2"/><path d="M1 15C4.5 8.5 7.5 8.5 10.5 12C12.5 14.3 14.5 14.3 17 11.5" fill="none" stroke="#2b2b2b" stroke-width="1.2"/><path d="M11.5 8.6L15 8.4L14.6 5Z" fill="#2b2b2b"/></svg>
<svg style="left:997px;top:89px" width="12" height="14" viewBox="0 0 12 14"><path d="M6 0V14M.5 7H11.5" stroke="#2b2b2b" stroke-width="1.3"/><rect x="3.6" y="5" width="4.8" height="4" fill="#e6e6e6" stroke="#2b2b2b" stroke-width="1"/></svg>
<svg style="left:1029px;top:88px" width="17" height="16" viewBox="0 0 17 16"><rect x="1" y="1" width="15" height="14" fill="none" stroke="#b9b9b9" stroke-width="1.6" stroke-dasharray="1.6 3.8"/><path d="M5 5h7v6H5z" fill="none" stroke="#b9b9b9" stroke-width="1" stroke-dasharray="1 1.5"/></svg>
<svg style="left:1074px;top:90px" width="12" height="12" viewBox="0 0 12 12"><path d="M6 0V12M0 6H12" stroke="#a0a0a0" stroke-width="1.6"/></svg>
<svg style="left:1863px;top:124px" width="10" height="9" viewBox="0 0 10 9"><path d="M0 0L4.5 4.5L0 9ZM5 0L9.5 4.5L5 9Z" fill="#b4b4b4"/></svg>
<svg style="left:1882px;top:124px" width="9" height="9" viewBox="0 0 9 9"><path d="M.5 .5l8 8M8.5 .5l-8 8" stroke="#b4b4b4" stroke-width="1.5"/></svg>
<svg style="left:33px;top:120px" width="16" height="15" viewBox="0 0 16 15"><path d="M8 0L16 7.5H13.7V15H9.7V10H6.3V15H2.3V7.5H0Z" fill="#333"/></svg>
<svg style="left:319px;top:122px" width="11" height="11" viewBox="0 0 11 11"><path d="M5.5 0V11M0 5.5H11" stroke="#b4b4b4" stroke-width="1.8"/></svg>
<svg style="left:13px;top:126px" width="10" height="17" viewBox="0 0 10 17"><path d="M.5 0V12.5L3.5 9.8L6 15.5L8.3 14.5L5.8 9H9.5Z" fill="#2b2b2b"/></svg>
<svg style="left:23px;top:139px" width="5" height="5" viewBox="0 0 5 5"><path d="M5 0V5H0Z" fill="#777"/></svg>
<svg style="left:8px;top:154px" width="17" height="18" viewBox="0 0 17 18"><path d="M4.5 0C3 6 4 12 6.5 16" fill="none" stroke="#2b2b2b" stroke-width="1.2"/><rect x="2.3" y="5" width="3.4" height="3.4" fill="#fff" stroke="#2b2b2b" stroke-width="1.1"/><path d="M9.5 10.5L16 12.5L11.5 16.5Z" fill="#2b2b2b"/></svg>
<svg style="left:22px;top:168px" width="5" height="5" viewBox="0 0 5 5"><path d="M5 0V5H0Z" fill="#777"/></svg>
<svg style="left:8px;top:192px" width="16" height="16" viewBox="0 0 16 16"><path d="M0 4.4H11V15.8M5.3 .5V11.1H16" fill="none" stroke="#2b2b2b" stroke-width="2"/></svg>
<svg style="left:23px;top:204px" width="5" height="5" viewBox="0 0 5 5"><path d="M5 0V5H0Z" fill="#777"/></svg>
<svg style="left:7.5px;top:221px" width="17.5" height="16.5" viewBox="0 0 14.5 16"><path d="M4.5 9V3.2a1.1 1.1 0 0 1 2.2 0V8M6.7 7V1.8a1.1 1.1 0 0 1 2.2 0V7.5M8.9 7V2.6a1.1 1.1 0 0 1 2.2 0V8M11.1 8V4.5a1.1 1.1 0 0 1 2.2 0V10.5C13.3 14 11.5 15.3 8.5 15.3C5.5 15.3 4.3 13.7 1.3 9.8C.6 8.7 2 7.7 3 8.7L4.5 10.3" fill="#f0f0f0" stroke="#2b2b2b" stroke-width="1.1" stroke-linejoin="round"/></svg>
<svg style="left:23px;top:232px" width="5" height="5" viewBox="0 0 5 5"><path d="M5 0V5H0Z" fill="#777"/></svg>
<svg style="left:8px;top:257px" width="17" height="17" viewBox="0 0 17 17"><path d="M2 15L15 2" stroke="#2b2b2b" stroke-width="1.3"/><rect x="0" y="13" width="4" height="4" fill="#2b2b2b"/><rect x="13" y="0" width="4" height="4" fill="#2b2b2b"/><rect x="6.6" y="6.6" width="3.8" height="3.8" fill="#f0f0f0" stroke="#2b2b2b" stroke-width="1.1"/></svg>
<svg style="left:23px;top:271px" width="5" height="5" viewBox="0 0 5 5"><path d="M5 0V5H0Z" fill="#777"/></svg>
<svg style="left:8px;top:286px" width="17" height="18" viewBox="0 0 17 18"><path d="M1 6C.5 1 8 .3 8.5 5C9 9 5 10.5 5.5 13.5C6 17 15 17.5 15.3 11.5C15.5 8 12 6.8 10.3 9" fill="none" stroke="#2b2b2b" stroke-width="1.7" stroke-linecap="round"/></svg>
<svg style="left:23px;top:299px" width="5" height="5" viewBox="0 0 5 5"><path d="M5 0V5H0Z" fill="#777"/></svg>
<svg style="left:8px;top:316.5px" width="16" height="15.5" viewBox="0 0 16 15.5"><rect x=".7" y=".7" width="14.6" height="14.1" fill="none" stroke="#2b2b2b" stroke-width="1.3"/></svg>
<svg style="left:23px;top:329px" width="5" height="5" viewBox="0 0 5 5"><path d="M5 0V5H0Z" fill="#777"/></svg>
<svg style="left:8px;top:346px" width="16" height="16" viewBox="0 0 16 16"><circle cx="8" cy="8" r="7.3" fill="none" stroke="#2b2b2b" stroke-width="1.3"/></svg>
<svg style="left:23px;top:359px" width="5" height="5" viewBox="0 0 5 5"><path d="M5 0V5H0Z" fill="#777"/></svg>
<svg style="left:8px;top:375px" width="17" height="16" viewBox="0 0 17 16"><path d="M.9 8L4.7 .9H12.3L16.1 8L12.3 15.1H4.7Z" fill="none" stroke="#2b2b2b" stroke-width="1.3"/></svg>
<svg style="left:23px;top:388px" width="5" height="5" viewBox="0 0 5 5"><path d="M5 0V5H0Z" fill="#777"/></svg>
<svg style="left:23px;top:425px" width="5" height="5" viewBox="0 0 5 5"><path d="M5 0V5H0Z" fill="#777"/></svg>
<svg style="left:8px;top:448px" width="17" height="16" viewBox="0 0 17 16"><path d="M2.5 13.5L14.5 2.5" stroke="#2b2b2b" stroke-width="1.3"/><path d="M.5 11L4.5 15.5M12.5 .5L16.5 5" stroke="#2b2b2b" stroke-width="1.3"/></svg>
<svg style="left:23px;top:461px" width="5" height="5" viewBox="0 0 5 5"><path d="M5 0V5H0Z" fill="#777"/></svg>
<svg style="left:8px;top:477px" width="17" height="17" viewBox="0 0 17 17"><path d="M2.5 2.5L13.5 13.5" stroke="#2b2b2b" stroke-width="1.5"/><rect x=".5" y=".5" width="4" height="4" fill="#c8693a" stroke="#6b2f12" stroke-width="1"/><rect x="11.5" y="11.5" width="4.5" height="4.5" fill="#c8693a" stroke="#6b2f12" stroke-width="1"/></svg>
<svg style="left:23px;top:490px" width="5" height="5" viewBox="0 0 5 5"><path d="M5 0V5H0Z" fill="#777"/></svg>
<svg style="left:8px;top:514px" width="17" height="16" viewBox="0 0 17 16"><path d="M4 13V15.3H16.3V4H14" fill="none" stroke="#2b2b2b" stroke-width="1.4"/><rect x=".7" y=".7" width="12.6" height="11.6" fill="#f0f0f0" stroke="#2b2b2b" stroke-width="1.4"/></svg>
<svg style="left:23px;top:527px" width="5" height="5" viewBox="0 0 5 5"><path d="M5 0V5H0Z" fill="#777"/></svg>
<svg style="left:8px;top:543px" width="16" height="16" viewBox="0 0 16 16"><rect width="16" height="16" fill="#2b2b2b"/><rect x="4.25" y="0.5" width="3.75" height="3.75" fill="#fff"/><rect x="11.75" y="0.5" width="3.75" height="3.75" fill="#fff"/><rect x="0.5" y="4.25" width="3.75" height="3.75" fill="#fff"/><rect x="8.0" y="4.25" width="3.75" height="3.75" fill="#fff"/><rect x="4.25" y="8.0" width="3.75" height="3.75" fill="#fff"/><rect x="11.75" y="8.0" width="3.75" height="3.75" fill="#fff"/><rect x="0.5" y="11.75" width="3.75" height="3.75" fill="#fff"/><rect x="8.0" y="11.75" width="3.75" height="3.75" fill="#fff"/></svg>
<svg style="left:8px;top:580px" width="17" height="17" viewBox="0 0 17 17"><path d="M2 15L1.3 13.2L9.5 5L12 7.5L3.8 15.7Z" fill="#c87846" stroke="#2b2b2b" stroke-width="1.2"/><path d="M9 3.5L13.5 8M11 5L13.5 2.2a1.7 1.7 0 0 1 2.4 2.4L13 7Z" fill="#2b2b2b" stroke="#2b2b2b" stroke-width="1.6"/></svg>
<svg style="left:23px;top:593px" width="5" height="5" viewBox="0 0 5 5"><path d="M5 0V5H0Z" fill="#777"/></svg>
<svg style="left:8px;top:609px" width="17" height="17" viewBox="0 0 17 17"><path d="M7.5 1L14.5 8L7.5 15L.8 8Z" fill="#fff" stroke="#2b2b2b" stroke-width="1.5"/><path d="M3 8.5H12L7.5 13Z" fill="#c8322d"/><path d="M7.5 1L4 -1" stroke="#2b2b2b" stroke-width="1.3"/><path d="M14 9.5C15.5 12 16.3 13 16.3 14.2A1.6 1.6 0 0 1 13 14.2C13 13 13.5 12 14 9.5Z" fill="#c8322d"/></svg>
<svg style="left:23px;top:622px" width="5" height="5" viewBox="0 0 5 5"><path d="M5 0V5H0Z" fill="#777"/></svg>
<svg style="left:10px;top:653px" width="12" height="12" viewBox="0 0 12 12"><path d="M6 0V12M0 6H12" stroke="#b9b9b9" stroke-width="1.8"/></svg>
<svg style="left:36px;top:143px" width="11" height="11" viewBox="0 0 11 11"><path d="M2 2L9.5 9.5M2 2H6M2 2V6" stroke="#777" stroke-width="1.1" fill="none"/><path d="M0 5.5h1M5.5 0v1M8 1.5h1.5M1.5 8v1.5" stroke="#999" stroke-width="1"/></svg>
<svg style="left:53px;top:967.5px" width="9" height="11" viewBox="0 0 9 11"><path d="M.5 2.5L2.5 .5H8.5V10.5H.5Z" fill="#f0f0f0" stroke="#7d7d7d"/><path d="M4.5 3.5v5M2 6h5" stroke="#7d7d7d"/></svg>
<svg style="left:69px;top:968px" width="11" height="10" viewBox="0 0 11 10"><path d="M1 0V10" stroke="#ababab" stroke-width="1.6"/><path d="M10.5 0V10L3 5Z" fill="#ababab"/></svg>
<svg style="left:86px;top:968px" width="8" height="10" viewBox="0 0 8 10"><path d="M7.5 0V10L0 5Z" fill="#ababab"/></svg>
<svg style="left:154px;top:968px" width="8" height="10" viewBox="0 0 8 10"><path d="M0 0V10L7.5 5Z" fill="#ababab"/></svg>
<svg style="left:169px;top:968px" width="11" height="10" viewBox="0 0 11 10"><path d="M10 0V10" stroke="#ababab" stroke-width="1.6"/><path d="M.5 0V10L8 5Z" fill="#ababab"/></svg>
<svg style="left:185px;top:967.5px" width="9" height="11" viewBox="0 0 9 11"><path d="M.5 2.5L2.5 .5H8.5V10.5H.5Z" fill="#f0f0f0" stroke="#7d7d7d"/><path d="M4.5 3.5v5M2 6h5" stroke="#7d7d7d"/></svg>
<svg style="left:205px;top:964px" width="64" height="17" viewBox="0 0 64 17"><path d="M0 .5H2.5L7 16.5H55.5L60.5 .5H64" fill="#fff" stroke="#6e6e6e" stroke-width="1"/><path d="M3 0H60" stroke="#fff" stroke-width="1.6"/></svg>
<svg style="left:801px;top:967px" width="6" height="12" viewBox="0 0 6 12"><rect x="0" y="0.0" width="1" height="1" fill="#b5b5b5"/><rect x="2" y="0.0" width="1" height="1" fill="#b5b5b5"/><rect x="1" y="1.5" width="1" height="1" fill="#b5b5b5"/><rect x="3" y="1.5" width="1" height="1" fill="#b5b5b5"/><rect x="0" y="3.0" width="1" height="1" fill="#b5b5b5"/><rect x="2" y="3.0" width="1" height="1" fill="#b5b5b5"/><rect x="1" y="4.5" width="1" height="1" fill="#b5b5b5"/><rect x="3" y="4.5" width="1" height="1" fill="#b5b5b5"/><rect x="0" y="6.0" width="1" height="1" fill="#b5b5b5"/><rect x="2" y="6.0" width="1" height="1" fill="#b5b5b5"/><rect x="1" y="7.5" width="1" height="1" fill="#b5b5b5"/><rect x="3" y="7.5" width="1" height="1" fill="#b5b5b5"/><rect x="0" y="9.0" width="1" height="1" fill="#b5b5b5"/><rect x="2" y="9.0" width="1" height="1" fill="#b5b5b5"/><rect x="1" y="10.5" width="1" height="1" fill="#b5b5b5"/><rect x="3" y="10.5" width="1" height="1" fill="#b5b5b5"/></svg>
<svg style="left:813px;top:968px" width="7" height="9" viewBox="0 0 7 9"><path d="M6 .8L1.5 4.5L6 8.2" fill="none" stroke="#333" stroke-width="1.7"/></svg>
<svg style="left:1536px;top:968px" width="7" height="9" viewBox="0 0 7 9"><path d="M1 .8L5.5 4.5L1 8.2" fill="none" stroke="#333" stroke-width="1.7"/></svg>
<svg style="left:1551px;top:966px" width="12" height="12" viewBox="0 0 12 12"><circle cx="5" cy="5" r="4.2" fill="#fff" stroke="#444" stroke-width="1.1"/><path d="M8 8L11.5 11.5" stroke="#444" stroke-width="1.6"/><circle cx="5" cy="5" r="1.2" fill="none" stroke="#444" stroke-width=".8"/></svg>
<svg style="left:1552px;top:163px" width="9" height="7" viewBox="0 0 9 7"><path d="M.8 6L4.5 2L8.2 6" fill="none" stroke="#444" stroke-width="2"/></svg>
<svg style="left:1552px;top:952px" width="9" height="7" viewBox="0 0 9 7"><path d="M.8 1L4.5 5L8.2 1" fill="none" stroke="#444" stroke-width="2"/></svg>
<svg style="left:34px;top:983px" width="6" height="18" viewBox="0 0 6 18"><rect x="1" y="1" width="1" height="1" fill="#c0c0c0"/><rect x="3" y="3" width="1" height="1" fill="#c0c0c0"/><rect x="1" y="5" width="1" height="1" fill="#c0c0c0"/><rect x="3" y="7" width="1" height="1" fill="#c0c0c0"/><rect x="1" y="9" width="1" height="1" fill="#c0c0c0"/><rect x="3" y="11" width="1" height="1" fill="#c0c0c0"/><rect x="1" y="13" width="1" height="1" fill="#c0c0c0"/><rect x="3" y="15" width="1" height="1" fill="#c0c0c0"/></svg>
<svg style="left:47px;top:987px" width="4" height="9" viewBox="0 0 4 9"><path d="M0 0L4 4.5L0 9Z" fill="#555"/></svg>
<svg style="left:62px;top:984px" width="14" height="15" viewBox="0 0 14 15"><path d="M1.5 13.5L1 12L8 5L10 7L3 14Z" fill="#c87846" stroke="#333" stroke-width="1"/><path d="M8 3.5L11.5 7M9.5 4.5L11.5 2.2a1.4 1.4 0 0 1 2 2L11.3 6.3Z" fill="#333" stroke="#333" stroke-width="1.3"/></svg>
<svg style="left:83px;top:988px" width="7" height="9" viewBox="0 0 7 9"><path d="M6 .8L1.5 4.5L6 8.2" fill="none" stroke="#d0d0d0" stroke-width="1.5"/></svg>
<svg style="left:97px;top:984px" width="16" height="16" viewBox="0 0 16 16"><path d="M1 15L15 1" stroke="#c0313a" stroke-width="1"/></svg>
<svg style="left:1528px;top:988px" width="7" height="9" viewBox="0 0 7 9"><path d="M1 .8L5.5 4.5L1 8.2" fill="none" stroke="#d0d0d0" stroke-width="1.5"/></svg>
<svg style="left:1546px;top:988px" width="9" height="9" viewBox="0 0 9 9"><path d="M1 1L4 4.5L1 8M5 1L8 4.5L5 8" fill="none" stroke="#d0d0d0" stroke-width="1.3"/></svg>
<svg style="left:11px;top:1013px" width="17" height="17" viewBox="0 0 17 17"><path d="M8.5 0l1.2.1.5 2 1.3.55L13.3 1.6l1.7 1.7-1.05 1.8.55 1.3 2 .5v2.4l-2 .5-.55 1.3 1.05 1.8-1.7 1.7-1.8-1.05-1.3.55-.5 2H7.3l-.5-2-1.3-.55-1.8 1.05-1.7-1.7 1.05-1.8L2.5 9.8l-2-.5V6.9l2-.5.55-1.3L2 3.3l1.7-1.7 1.8 1.05 1.3-.55.5-2z" fill="#2b2b2b"/><circle cx="8.5" cy="8.1" r="3.3" fill="#f4f4f4"/></svg>
<svg style="left:25px;top:1026px" width="5" height="5" viewBox="0 0 5 5"><path d="M5 0V5H0Z" fill="#888"/></svg>
<svg style="left:1433px;top:1011px" width="17" height="19" viewBox="0 0 17 19"><path d="M8 2L15 9L8 16L1.5 9Z" fill="#fff" stroke="#2b2b2b" stroke-width="1.5"/><path d="M4 10H12L8 14Z" fill="#c8322d"/><path d="M14 11C15.5 13.5 16.3 14.5 16.3 15.7A1.6 1.6 0 0 1 13 15.7C13 14.5 13.5 13.5 14 11Z" fill="#c8322d"/></svg>
<svg style="left:1452px;top:1011px" width="19" height="19" viewBox="0 0 19 19"><path d="M1 18L18 1" stroke="#c0313a" stroke-width="1.2"/></svg>
<svg style="left:1638px;top:1012px" width="9" height="18" viewBox="0 0 9 18"><path d="M4.5 .7L7.8 8.5L6.3 11.5H2.7L1.2 8.5Z" fill="#fff" stroke="#2b2b2b" stroke-width="1.1"/><path d="M4.5 1V7" stroke="#2b2b2b" stroke-width="1"/><rect x="2.2" y="12.5" width="4.6" height="4.6" fill="#fff" stroke="#2b2b2b" stroke-width="1.1"/></svg>
<svg style="left:1893px;top:1011px" width="17" height="19" viewBox="0 0 17 19"><rect x=".5" y=".5" width="16" height="13" fill="#fff" stroke="#444"/><rect x="1.5" y="1.5" width="14" height="5.5" fill="#d0313a"/><rect x="1.5" y="7" width="14" height="5.5" fill="#2a8ad0"/><circle cx="8.5" cy="7" r="2" fill="#fff"/><path d="M5 16h7M8.5 13.5V16" stroke="#444" stroke-width="1.4"/><path d="M3 18.5h11" stroke="#444" stroke-width="1.2"/></svg>
<svg style="left:1574px;top:180px" width="17" height="18" viewBox="0 0 17 18"><path d="M1 4.5L4.5 1H13V7M1 4.5V15.5H5.5" fill="none" stroke="#2b2b2b" stroke-width="1.3"/><path d="M11 11L16 13.7L11 16.5L6 13.7Z" fill="#2b2b2b"/><path d="M11 7.5L15.5 10L11 12.5L6.5 10Z" fill="#fff" stroke="#2b2b2b" stroke-width="1.1"/></svg>
<svg style="left:1604px;top:182px" width="16" height="14" viewBox="0 0 16 14"><path d="M8 5.5L15.5 9.7L8 14L.5 9.7Z" fill="#2b2b2b"/><path d="M8 .8L15 5L8 9.2L1 5Z" fill="#fff" stroke="#2b2b2b" stroke-width="1.3" stroke-linejoin="round"/></svg>
<svg style="left:1634px;top:181px" width="14" height="16" viewBox="0 0 14 16"><path d="M1 4.5L4.5 1H13V15H1Z" fill="#fff" stroke="#2b2b2b" stroke-width="1.4"/></svg>
<svg style="left:1856px;top:181px" width="17" height="17" viewBox="0 0 17 17"><path d="M8.5 0l1.2.1.5 2 1.3.55L13.3 1.6l1.7 1.7-1.05 1.8.55 1.3 2 .5v2.4l-2 .5-.55 1.3 1.05 1.8-1.7 1.7-1.8-1.05-1.3.55-.5 2H7.3l-.5-2-1.3-.55-1.8 1.05-1.7-1.7 1.05-1.8L2.5 9.8l-2-.5V6.9l2-.5.55-1.3L2 3.3l1.7-1.7 1.8 1.05 1.3-.55.5-2z" fill="#2b2b2b"/><circle cx="8.5" cy="8.1" r="3.3" fill="#f0f0f0"/></svg>
<svg style="left:1870px;top:195px" width="5" height="5" viewBox="0 0 5 5"><path d="M5 0V5H0Z" fill="#666"/></svg>
<svg style="left:1580px;top:215.5px" width="8" height="6" viewBox="0 0 8 6"><path d="M0 0H8L4 6Z" fill="#333"/></svg>
<svg style="left:1580px;top:267.5px" width="8" height="6" viewBox="0 0 8 6"><path d="M0 0H8L4 6Z" fill="#333"/></svg>
<svg style="left:1580px;top:345.5px" width="8" height="6" viewBox="0 0 8 6"><path d="M0 0H8L4 6Z" fill="#333"/></svg>
<svg style="left:1580px;top:397.5px" width="8" height="6" viewBox="0 0 8 6"><path d="M0 0H8L4 6Z" fill="#333"/></svg>
<svg style="left:1595px;top:238px" width="13" height="13" viewBox="0 0 13 13"><path d="M4.5 0V12M1 3.5H12.5" stroke="#555" stroke-width="1" stroke-dasharray="2 1"/><circle cx="4.5" cy="3.5" r="1.3" fill="#fff" stroke="#444" stroke-width=".8"/></svg>
<svg style="left:1595px;top:368px" width="13" height="13" viewBox="0 0 13 13"><path d="M4.5 0V12M1 3.5H12.5" stroke="#555" stroke-width="1" stroke-dasharray="2 1"/><circle cx="4.5" cy="3.5" r="1.3" fill="#fff" stroke="#444" stroke-width=".8"/></svg>
<svg style="left:1595px;top:264px" width="13" height="12" viewBox="0 0 16 14"><path d="M8 5.5L15.5 9.7L8 14L.5 9.7Z" fill="#2b2b2b"/><path d="M8 .8L15 5L8 9.2L1 5Z" fill="#fff" stroke="#2b2b2b" stroke-width="1.3" stroke-linejoin="round"/></svg>
<svg style="left:1595px;top:394px" width="13" height="13" viewBox="0 0 13 13"><rect x="2" y="2" width="9" height="9" fill="#444"/><path d="M0 .5H3M0 .5V3M10 .5H13M12.5 0V3M0 12.5H3M.5 10V13M10 12.5H13M12.5 10V13" stroke="#2b2b2b" stroke-width="1" fill="none"/><rect x="3.5" y="3.5" width="6" height="6" fill="#888"/></svg>
<svg style="left:1595px;top:446px" width="13" height="13" viewBox="0 0 13 13"><path d="M4 0V13M9 0V13M0 4H13M0 9H13" stroke="#2b2b2b" stroke-width="1.1"/></svg>
<svg style="left:1606px;top:290px" width="8" height="14" viewBox="0 0 8 14"><path d="M3 1L6 6L5.5 11L2 13L1 9" fill="none" stroke="#d8d8d8" stroke-width="1"/></svg>
<svg style="left:1605px;top:314px" width="11" height="16" viewBox="0 0 11 16"><path d="M1 1H4V5H7V1H10V15H1V9H5V12H7V8H1Z" fill="none" stroke="#c5dcef" stroke-width="1"/></svg>
<svg style="left:1605px;top:419px" width="12" height="15" viewBox="0 0 12 15"><rect width="12" height="15" fill="#bdbdbd"/><rect x="2" y="2" width="8" height="8" fill="#d2d2d2"/></svg>
<svg style="left:1848px;top:238px" width="12" height="12" viewBox="0 0 12 12"><path d="M3 6.5V.6H7L9 2.5V6.5" fill="#fff" stroke="#555" stroke-width=".9"/><path d="M.5 11.4V6.5H11.5V11.4Z" fill="#fff" stroke="#555" stroke-width=".9"/><path d="M.5 .5L9 8.5" stroke="#555" stroke-width=".8"/></svg>
<div class="a" style="left:1868px;top:235px;width:4px;height:17.5px;background:#0a14c8;border-radius:2px;"></div>
<div class="a" style="left:1868px;top:261px;width:4px;height:17.5px;background:#111;border-radius:2px;"></div>
<svg style="left:1848px;top:368px" width="12" height="12" viewBox="0 0 12 12"><path d="M3 6.5V.6H7L9 2.5V6.5" fill="#fff" stroke="#555" stroke-width=".9"/><path d="M.5 11.4V6.5H11.5V11.4Z" fill="#fff" stroke="#555" stroke-width=".9"/><path d="M.5 .5L9 8.5" stroke="#555" stroke-width=".8"/></svg>
<div class="a" style="left:1868px;top:365px;width:4px;height:17.5px;background:#0a14c8;border-radius:2px;"></div>
<svg style="left:1816px;top:396px" width="14" height="10" viewBox="0 0 14 10"><path d="M.5 5C3 1 10 1 13 5C10 9 3 9 .5 5Z" fill="#fff" stroke="#333" stroke-width="1"/><circle cx="6.8" cy="5" r="2.2" fill="none" stroke="#333" stroke-width="1"/><path d="M1.5 .5L12 9.5" stroke="#333" stroke-width="1"/></svg>
<svg style="left:1833px;top:394px" width="10" height="12" viewBox="0 0 10 12"><path d="M2.2 5.5V3.5a2.8 2.8 0 0 1 5.6 0V5.5" fill="none" stroke="#333" stroke-width="1.2"/><rect x=".5" y="5.5" width="9" height="6" fill="#333" stroke="#333" stroke-width="1"/></svg>
<svg style="left:1848px;top:394px" width="12" height="12" viewBox="0 0 12 12"><path d="M3 6.5V.6H7L9 2.5V6.5" fill="#fff" stroke="#555" stroke-width=".9"/><path d="M.5 11.4V6.5H11.5V11.4Z" fill="#fff" stroke="#555" stroke-width=".9"/><path d="M.5 .5L9 8.5" stroke="#555" stroke-width=".8"/></svg>
<div class="a" style="left:1868px;top:391px;width:4px;height:17.5px;background:#111;border-radius:2px;"></div>
<svg style="left:1816px;top:448px" width="14" height="10" viewBox="0 0 14 10"><path d="M.5 5C3 1 10 1 13 5C10 9 3 9 .5 5Z" fill="#fff" stroke="#333" stroke-width="1"/><circle cx="6.8" cy="5" r="2.2" fill="none" stroke="#333" stroke-width="1"/><path d="M1.5 .5L12 9.5" stroke="#333" stroke-width="1"/></svg>
<svg style="left:1833px;top:446px" width="10" height="12" viewBox="0 0 10 12"><path d="M2.2 5.5V3.5a2.8 2.8 0 0 1 5.6 0V5.5" fill="none" stroke="#c9c9c9" stroke-width="1.2"/><rect x=".5" y="5.5" width="9" height="6" fill="#dcdcdc" stroke="#c9c9c9" stroke-width="1"/></svg>
<svg style="left:1848px;top:446px" width="12" height="12" viewBox="0 0 12 12"><path d="M3 6.5V.6H7L9 2.5V6.5" fill="#fff" stroke="#cfcfcf" stroke-width=".9"/><path d="M.5 11.4V6.5H11.5V11.4Z" fill="#fff" stroke="#cfcfcf" stroke-width=".9"/><path d="M.5 .5L9 8.5" stroke="#cfcfcf" stroke-width=".8"/></svg>
<div class="a" style="left:1868px;top:443px;width:4px;height:17.5px;background:#c8c8c8;border-radius:2px;"></div>
<svg style="left:1575px;top:980px" width="17" height="17" viewBox="0 0 17 17"><path d="M1 11.5L8 7.5L15 11.5L8 15.5Z" fill="#2b2b2b"/><path d="M1 7.5L6 4.5" stroke="#2b2b2b" stroke-width="1.2"/><path d="M1 7.5L4.5 9.5" stroke="#2b2b2b" stroke-width="1.2"/><rect x="8" y="0" width="8" height="8" fill="#1a9e48"/><path d="M12 1.5v5M9.5 4h5" stroke="#fff" stroke-width="1.3"/></svg>
<svg style="left:1604px;top:980px" width="18" height="18" viewBox="0 0 18 18"><path d="M1 6L6 3M1 6L8 10L12 8M1 9.5L8 13.5L15 9.5M1 13L8 17L15 13" fill="none" stroke="#2b2b2b" stroke-width="1.2"/><rect x="9" y="0" width="8" height="8" fill="#1a9e48"/><path d="M13 1.5v5M10.5 4h5" stroke="#fff" stroke-width="1.3"/></svg>
<svg style="left:1618px;top:994px" width="5" height="5" viewBox="0 0 5 5"><path d="M5 0V5H0Z" fill="#666"/></svg>
<svg style="left:1634px;top:980px" width="14" height="17" viewBox="0 0 14 17"><path d="M1.5 5H12.5L11.5 16.5H2.5Z" fill="#2b2b2b"/><path d="M0 3.3H14" stroke="#2b2b2b" stroke-width="1.6"/><path d="M5 2.5V.8H9V2.5" fill="none" stroke="#2b2b2b" stroke-width="1.3"/><path d="M5.2 7V14.5M8.8 7V14.5" stroke="#f0f0f0" stroke-width="1.1"/></svg>
<svg style="left:1757px;top:980px" width="116" height="18" viewBox="0 0 116 18"><path d="M.5 3V15M114.5 3V15M57.5 4V14M.5 9H114.5" stroke="#9a9a9a" stroke-width="1" fill="none"/><rect x="32.5" y=".5" width="5" height="17" fill="#e2e2e2" stroke="#9a9a9a"/></svg>
<svg style="left:1881.5px;top:144px" width="15" height="15.5" viewBox="0 0 15 15.5"><path d="M7.5 5.5L14.3 9.5L7.5 13.5L.7 9.5Z" fill="#cce4f7" stroke="#22303c" stroke-width="1.2" stroke-linejoin="round"/><path d="M7.5 .8L14.3 4.8L7.5 8.8L.7 4.8Z" fill="#cce4f7" stroke="#22303c" stroke-width="1.2" stroke-linejoin="round"/></svg>
<svg style="left:1882px;top:236px" width="15" height="17" viewBox="0 0 15 17"><path d="M6 1L11 6L6 11L1.5 6Z" fill="#fff" stroke="#2b2b2b" stroke-width="1.3"/><path d="M3 6.5H9L6 9.5Z" fill="#c87846"/><path d="M11 8.5h3.5M11 10.5h3.5M8 13.5l3-3" stroke="#2b2b2b" stroke-width="1.1"/><path d="M5 12.5l1.5 1.5" stroke="#2b2b2b" stroke-width="1.1"/></svg>
<svg style="left:1884px;top:362px" width="11" height="11" viewBox="0 0 11 11"><path d="M5.5 0V11M0 5.5H11" stroke="#b9b9b9" stroke-width="1.6"/></svg>
<svg style="left:1900px;top:119px" width="20" height="6" viewBox="0 0 20 6"><rect x="1" y="0" width="1" height="1" fill="#c8c8c8"/><rect x="2" y="2" width="1" height="1" fill="#c8c8c8"/><rect x="1" y="4" width="1" height="1" fill="#c8c8c8"/><rect x="3" y="0" width="1" height="1" fill="#c8c8c8"/><rect x="4" y="2" width="1" height="1" fill="#c8c8c8"/><rect x="3" y="4" width="1" height="1" fill="#c8c8c8"/><rect x="5" y="0" width="1" height="1" fill="#c8c8c8"/><rect x="6" y="2" width="1" height="1" fill="#c8c8c8"/><rect x="5" y="4" width="1" height="1" fill="#c8c8c8"/><rect x="7" y="0" width="1" height="1" fill="#c8c8c8"/><rect x="8" y="2" width="1" height="1" fill="#c8c8c8"/><rect x="7" y="4" width="1" height="1" fill="#c8c8c8"/><rect x="9" y="0" width="1" height="1" fill="#c8c8c8"/><rect x="10" y="2" width="1" height="1" fill="#c8c8c8"/><rect x="9" y="4" width="1" height="1" fill="#c8c8c8"/><rect x="11" y="0" width="1" height="1" fill="#c8c8c8"/><rect x="12" y="2" width="1" height="1" fill="#c8c8c8"/><rect x="11" y="4" width="1" height="1" fill="#c8c8c8"/><rect x="13" y="0" width="1" height="1" fill="#c8c8c8"/><rect x="14" y="2" width="1" height="1" fill="#c8c8c8"/><rect x="13" y="4" width="1" height="1" fill="#c8c8c8"/><rect x="15" y="0" width="1" height="1" fill="#c8c8c8"/><rect x="16" y="2" width="1" height="1" fill="#c8c8c8"/><rect x="15" y="4" width="1" height="1" fill="#c8c8c8"/><rect x="17" y="0" width="1" height="1" fill="#c8c8c8"/><rect x="18" y="2" width="1" height="1" fill="#c8c8c8"/><rect x="17" y="4" width="1" height="1" fill="#c8c8c8"/></svg>
<svg style="left:1908px;top:130.5px" width="4" height="9" viewBox="0 0 4 9"><path d="M0 0L4 4.5L0 9Z" fill="#666"/></svg>
<svg style="left:1903.5px;top:147.5px" width="13" height="14" viewBox="0 0 13 14"><path d="M1.5 13.5L1 12L8 5L10 7L3 14Z" fill="#c87846" stroke="#333" stroke-width="1"/><path d="M8 3.5L11.5 7M9.5 4.5L11.5 2.2a1.4 1.4 0 0 1 2 2L11.3 6.3Z" fill="#333" stroke="#333" stroke-width="1.3"/></svg>
<svg style="left:1906px;top:170px" width="9" height="6" viewBox="0 0 9 6"><path d="M.8 5.2L4.5 1.3L8.2 5.2" fill="none" stroke="#d4d4d4" stroke-width="1.5"/></svg>
<svg style="left:1903px;top:183px" width="15" height="15" viewBox="0 0 15 15"><path d="M0 15L15 0" stroke="#c0313a" stroke-width="1"/></svg>
<div class="a" style="left:1900px;top:960px;width:20px;height:43px;background:#f0f0f0;"></div>
<svg style="left:1905px;top:966px" width="10" height="7" viewBox="0 0 10 7"><path d="M1 1L5 5.2L9 1" fill="none" stroke="#9a9a9a" stroke-width="1.5"/></svg>
<svg style="left:1905px;top:984px" width="10" height="9" viewBox="0 0 10 9"><path d="M1 1L4.2 4.5L1 8M5.5 1L8.7 4.5L5.5 8" fill="none" stroke="#c4c4c4" stroke-width="1.3"/></svg>
<svg style="left:0px;top:0px" width="1920" height="1080" viewBox="0 0 1920 1080"><path d="M56.5 155.5v-1.5 M62.5 155.5v-3 M68.5 155.5v-1.5 M73.5 155.5v-1.5 M79.5 155.5v-1.5 M85.5 155.5v-1.5 M90.5 155.5v-6 M96.5 155.5v-1.5 M102.5 155.5v-1.5 M107.5 155.5v-1.5 M113.5 155.5v-1.5 M119.5 155.5v-3 M124.5 155.5v-1.5 M130.5 155.5v-1.5 M136.5 155.5v-1.5 M141.5 155.5v-1.5 M147.5 155.5v-6 M153.5 155.5v-1.5 M158.5 155.5v-1.5 M164.5 155.5v-1.5 M170.5 155.5v-1.5 M175.5 155.5v-3 M181.5 155.5v-1.5 M187.5 155.5v-1.5 M192.5 155.5v-1.5 M198.5 155.5v-1.5 M204.5 155.5v-6 M209.5 155.5v-1.5 M215.5 155.5v-1.5 M221.5 155.5v-1.5 M226.5 155.5v-1.5 M232.5 155.5v-3 M238.5 155.5v-1.5 M243.5 155.5v-1.5 M249.5 155.5v-1.5 M255.5 155.5v-1.5 M260.5 155.5v-6 M266.5 155.5v-1.5 M272.5 155.5v-1.5 M277.5 155.5v-1.5 M283.5 155.5v-1.5 M289.5 155.5v-3 M294.5 155.5v-1.5 M300.5 155.5v-1.5 M306.5 155.5v-1.5 M311.5 155.5v-1.5 M317.5 155.5v-6 M323.5 155.5v-1.5 M328.5 155.5v-1.5 M334.5 155.5v-1.5 M340.5 155.5v-1.5 M345.5 155.5v-3 M351.5 155.5v-1.5 M357.5 155.5v-1.5 M362.5 155.5v-1.5 M368.5 155.5v-1.5 M374.5 155.5v-6 M379.5 155.5v-1.5 M385.5 155.5v-1.5 M391.5 155.5v-1.5 M396.5 155.5v-1.5 M402.5 155.5v-3 M408.5 155.5v-1.5 M413.5 155.5v-1.5 M419.5 155.5v-1.5 M425.5 155.5v-1.5 M430.5 155.5v-6 M436.5 155.5v-1.5 M442.5 155.5v-1.5 M447.5 155.5v-1.5 M453.5 155.5v-1.5 M459.5 155.5v-3 M464.5 155.5v-1.5 M470.5 155.5v-1.5 M476.5 155.5v-1.5 M481.5 155.5v-1.5 M487.5 155.5v-6 M493.5 155.5v-1.5 M498.5 155.5v-1.5 M504.5 155.5v-1.5 M510.5 155.5v-1.5 M515.5 155.5v-3 M521.5 155.5v-1.5 M527.5 155.5v-1.5 M532.5 155.5v-1.5 M538.5 155.5v-1.5 M544.5 155.5v-6 M549.5 155.5v-1.5 M555.5 155.5v-1.5 M561.5 155.5v-1.5 M566.5 155.5v-1.5 M572.5 155.5v-3 M578.5 155.5v-1.5 M583.5 155.5v-1.5 M589.5 155.5v-1.5 M595.5 155.5v-1.5 M600.5 155.5v-6 M606.5 155.5v-1.5 M612.5 155.5v-1.5 M617.5 155.5v-1.5 M623.5 155.5v-1.5 M629.5 155.5v-3 M634.5 155.5v-1.5 M640.5 155.5v-1.5 M646.5 155.5v-1.5 M651.5 155.5v-1.5 M657.5 155.5v-6 M663.5 155.5v-1.5 M668.5 155.5v-1.5 M674.5 155.5v-1.5 M680.5 155.5v-1.5 M685.5 155.5v-3 M691.5 155.5v-1.5 M697.5 155.5v-1.5 M702.5 155.5v-1.5 M708.5 155.5v-1.5 M714.5 155.5v-6 M719.5 155.5v-1.5 M725.5 155.5v-1.5 M731.5 155.5v-1.5 M736.5 155.5v-1.5 M742.5 155.5v-3 M748.5 155.5v-1.5 M753.5 155.5v-1.5 M759.5 155.5v-1.5 M765.5 155.5v-1.5 M770.5 155.5v-6 M776.5 155.5v-1.5 M782.5 155.5v-1.5 M787.5 155.5v-1.5 M793.5 155.5v-1.5 M799.5 155.5v-3 M804.5 155.5v-1.5 M810.5 155.5v-1.5 M816.5 155.5v-1.5 M821.5 155.5v-1.5 M827.5 155.5v-6 M833.5 155.5v-1.5 M838.5 155.5v-1.5 M844.5 155.5v-1.5 M850.5 155.5v-1.5 M855.5 155.5v-3 M861.5 155.5v-1.5 M867.5 155.5v-1.5 M872.5 155.5v-1.5 M878.5 155.5v-1.5 M883.5 155.5v-6 M889.5 155.5v-1.5 M895.5 155.5v-1.5 M900.5 155.5v-1.5 M906.5 155.5v-1.5 M912.5 155.5v-3 M917.5 155.5v-1.5 M923.5 155.5v-1.5 M929.5 155.5v-1.5 M934.5 155.5v-1.5 M940.5 155.5v-6 M946.5 155.5v-1.5 M951.5 155.5v-1.5 M957.5 155.5v-1.5 M963.5 155.5v-1.5 M968.5 155.5v-3 M974.5 155.5v-1.5 M980.5 155.5v-1.5 M985.5 155.5v-1.5 M991.5 155.5v-1.5 M997.5 155.5v-6 M1002.5 155.5v-1.5 M1008.5 155.5v-1.5 M1014.5 155.5v-1.5 M1019.5 155.5v-1.5 M1025.5 155.5v-3 M1031.5 155.5v-1.5 M1036.5 155.5v-1.5 M1042.5 155.5v-1.5 M1048.5 155.5v-1.5 M1053.5 155.5v-6 M1059.5 155.5v-1.5 M1065.5 155.5v-1.5 M1070.5 155.5v-1.5 M1076.5 155.5v-1.5 M1082.5 155.5v-3 M1087.5 155.5v-1.5 M1093.5 155.5v-1.5 M1099.5 155.5v-1.5 M1104.5 155.5v-1.5 M1110.5 155.5v-6 M1116.5 155.5v-1.5 M1121.5 155.5v-1.5 M1127.5 155.5v-1.5 M1133.5 155.5v-1.5 M1138.5 155.5v-3 M1144.5 155.5v-1.5 M1150.5 155.5v-1.5 M1155.5 155.5v-1.5 M1161.5 155.5v-1.5 M1167.5 155.5v-6 M1172.5 155.5v-1.5 M1178.5 155.5v-1.5 M1184.5 155.5v-1.5 M1189.5 155.5v-1.5 M1195.5 155.5v-3 M1201.5 155.5v-1.5 M1206.5 155.5v-1.5 M1212.5 155.5v-1.5 M1218.5 155.5v-1.5 M1223.5 155.5v-6 M1229.5 155.5v-1.5 M1235.5 155.5v-1.5 M1240.5 155.5v-1.5 M1246.5 155.5v-1.5 M1252.5 155.5v-3 M1257.5 155.5v-1.5 M1263.5 155.5v-1.5 M1269.5 155.5v-1.5 M1274.5 155.5v-1.5 M1280.5 155.5v-6 M1286.5 155.5v-1.5 M1291.5 155.5v-1.5 M1297.5 155.5v-1.5 M1303.5 155.5v-1.5 M1308.5 155.5v-3 M1314.5 155.5v-1.5 M1320.5 155.5v-1.5 M1325.5 155.5v-1.5 M1331.5 155.5v-1.5 M1337.5 155.5v-6 M1342.5 155.5v-1.5 M1348.5 155.5v-1.5 M1354.5 155.5v-1.5 M1359.5 155.5v-1.5 M1365.5 155.5v-3 M1371.5 155.5v-1.5 M1376.5 155.5v-1.5 M1382.5 155.5v-1.5 M1388.5 155.5v-1.5 M1393.5 155.5v-6 M1399.5 155.5v-1.5 M1405.5 155.5v-1.5 M1410.5 155.5v-1.5 M1416.5 155.5v-1.5 M1422.5 155.5v-3 M1427.5 155.5v-1.5 M1433.5 155.5v-1.5 M1439.5 155.5v-1.5 M1444.5 155.5v-1.5 M1450.5 155.5v-6 M1456.5 155.5v-1.5 M1461.5 155.5v-1.5 M1467.5 155.5v-1.5 M1473.5 155.5v-1.5 M1478.5 155.5v-3 M1484.5 155.5v-1.5 M1490.5 155.5v-1.5 M1495.5 155.5v-1.5 M1501.5 155.5v-1.5 M1507.5 155.5v-6 M1512.5 155.5v-1.5 M1518.5 155.5v-1.5 M1524.5 155.5v-1.5 M1529.5 155.5v-1.5 M1535.5 155.5v-3 M1541.5 155.5v-1.5 M1546.5 155.5v-1.5 M1552.5 155.5v-1.5 M1558.5 155.5v-1.5 M1563.5 155.5v-6" stroke="#8f8f8f" stroke-width="1" fill="none"/></svg>
<div class="a" style="left:1499px;top:140px;width:1px;height:16px;border-left:1px dashed #222;"></div>
<svg style="left:0px;top:0px" width="1920" height="1080" viewBox="0 0 1920 1080"><path d="M48.5 163.5h-1.5 M48.5 169.5h-1.5 M48.5 174.5h-1.5 M48.5 180.5h-6 M48.5 186.5h-1.5 M48.5 191.5h-1.5 M48.5 197.5h-1.5 M48.5 203.5h-1.5 M48.5 208.5h-3 M48.5 214.5h-1.5 M48.5 220.5h-1.5 M48.5 225.5h-1.5 M48.5 231.5h-1.5 M48.5 237.5h-6 M48.5 242.5h-1.5 M48.5 248.5h-1.5 M48.5 254.5h-1.5 M48.5 259.5h-1.5 M48.5 265.5h-3 M48.5 271.5h-1.5 M48.5 276.5h-1.5 M48.5 282.5h-1.5 M48.5 288.5h-1.5 M48.5 293.5h-6 M48.5 299.5h-1.5 M48.5 305.5h-1.5 M48.5 310.5h-1.5 M48.5 316.5h-1.5 M48.5 322.5h-3 M48.5 327.5h-1.5 M48.5 333.5h-1.5 M48.5 339.5h-1.5 M48.5 344.5h-1.5 M48.5 350.5h-6 M48.5 356.5h-1.5 M48.5 361.5h-1.5 M48.5 367.5h-1.5 M48.5 373.5h-1.5 M48.5 378.5h-3 M48.5 384.5h-1.5 M48.5 390.5h-1.5 M48.5 395.5h-1.5 M48.5 401.5h-1.5 M48.5 407.5h-6 M48.5 412.5h-1.5 M48.5 418.5h-1.5 M48.5 424.5h-1.5 M48.5 429.5h-1.5 M48.5 435.5h-3 M48.5 441.5h-1.5 M48.5 446.5h-1.5 M48.5 452.5h-1.5 M48.5 458.5h-1.5 M48.5 463.5h-6 M48.5 469.5h-1.5 M48.5 475.5h-1.5 M48.5 480.5h-1.5 M48.5 486.5h-1.5 M48.5 492.5h-3 M48.5 497.5h-1.5 M48.5 503.5h-1.5 M48.5 509.5h-1.5 M48.5 514.5h-1.5 M48.5 520.5h-6 M48.5 526.5h-1.5 M48.5 531.5h-1.5 M48.5 537.5h-1.5 M48.5 543.5h-1.5 M48.5 548.5h-3 M48.5 554.5h-1.5 M48.5 560.5h-1.5 M48.5 565.5h-1.5 M48.5 571.5h-1.5 M48.5 577.5h-6 M48.5 582.5h-1.5 M48.5 588.5h-1.5 M48.5 594.5h-1.5 M48.5 599.5h-1.5 M48.5 605.5h-3 M48.5 611.5h-1.5 M48.5 616.5h-1.5 M48.5 622.5h-1.5 M48.5 628.5h-1.5 M48.5 633.5h-6 M48.5 639.5h-1.5 M48.5 645.5h-1.5 M48.5 650.5h-1.5 M48.5 656.5h-1.5 M48.5 662.5h-3 M48.5 667.5h-1.5 M48.5 673.5h-1.5 M48.5 679.5h-1.5 M48.5 684.5h-1.5 M48.5 690.5h-6 M48.5 696.5h-1.5 M48.5 701.5h-1.5 M48.5 707.5h-1.5 M48.5 713.5h-1.5 M48.5 718.5h-3 M48.5 724.5h-1.5 M48.5 730.5h-1.5 M48.5 735.5h-1.5 M48.5 741.5h-1.5 M48.5 747.5h-6 M48.5 752.5h-1.5 M48.5 758.5h-1.5 M48.5 764.5h-1.5 M48.5 769.5h-1.5 M48.5 775.5h-3 M48.5 781.5h-1.5 M48.5 786.5h-1.5 M48.5 792.5h-1.5 M48.5 798.5h-1.5 M48.5 803.5h-6 M48.5 809.5h-1.5 M48.5 815.5h-1.5 M48.5 820.5h-1.5 M48.5 826.5h-1.5 M48.5 832.5h-3 M48.5 837.5h-1.5 M48.5 843.5h-1.5 M48.5 849.5h-1.5 M48.5 854.5h-1.5 M48.5 860.5h-6 M48.5 866.5h-1.5 M48.5 871.5h-1.5 M48.5 877.5h-1.5 M48.5 883.5h-1.5 M48.5 888.5h-3 M48.5 894.5h-1.5 M48.5 900.5h-1.5 M48.5 905.5h-1.5 M48.5 911.5h-1.5 M48.5 917.5h-6 M48.5 922.5h-1.5 M48.5 928.5h-1.5 M48.5 934.5h-1.5 M48.5 939.5h-1.5 M48.5 945.5h-3 M48.5 951.5h-1.5 M48.5 956.5h-1.5" stroke="#8f8f8f" stroke-width="1" fill="none"/></svg>
<div class="a" style="left:33px;top:955px;width:16px;height:1px;border-top:1px dashed #222;"></div>
<div class="a" style="left:44px;top:974px;width:4px;height:1px;background:#777;"></div>
<svg style="left:0px;top:0px" width="1920" height="1080" viewBox="0 0 1920 1080"><path d="M369.5 429 L424.5 523.2 L418.5 623 L362.5 653.3 L342.3 577.6" fill="none" stroke="#222" stroke-width="0.9"/><path d="M621.5 455.3 L628.2 455.3 L635.4 454.5 L642.4 454.4 L648.5 453.3 L657.3 452.3 L666.3 451.3 L674.4 450.4 L683.4 449.4 L688.4 441.4 L694.4 445.3 L693.6 454.3 L697.5 458.4 L697.5 465.5 L697.5 472.8 L697.6 480.2 L697.8 487.5 L698 494.8 L698.5 502 L699.2 511.5 L700 518 L701 525.5 L702 533 L703.3 540 L705 547 L707.4 553.6 L709.6 559 L711.8 564.3 L714.2 569.8 L716.5 575.3 L719.3 580.5 L722.5 586 L726.1 591.4 L730.5 591.5 L736 590.8 L741.5 590.6 L746.6 590.5 L751 587.3 L755.5 584.2 L760 580.8 L764.3 577.3 L768.3 574.1 L772 568.5 L775.6 563.3 L779.1 558.5 L782.8 551.5 L786.3 544.5 L790.7 537.5 L794.8 530.3 L795.5 523 L796 515.5 L796 507.9 L795.8 500 L795.4 492.5 L794.8 485 L793.9 478 L793.1 471.8 L793.4 465 L793.8 458 L794.3 452.5 L794.8 448.9 L799 450.5 L803.5 452.5 L808 454.4 L813.5 456.8 L819 459.2 L824.9 461.4 L830.5 460.3 L836 459.3 L841 458.4 L846.5 457.6 L852 459 L858 461 L862.5 463 L864.6 465.5 L865.8 479 L864.8 492.5 L864 505.5 L863 519 L862.2 532 L861.6 546 L861 559 L860.7 572 L860.5 583.7 L860.3 596 L860 607.5 L859.5 618.5 L858.6 629.5 L858.3 640 L858 650.5 L857.7 661 L857.5 671 L857.4 680 L857.4 688.2 L857.6 697 L857.9 707 L858.2 717 L858.5 727 L858.6 736.3 L858.6 746 L858.5 756 L858.3 766 L858.1 777.3 L857.3 788 L856.5 798.5 L855.7 808.6 L855.7 820 L855.7 832 L855.7 844 L855.7 856.7 L856.2 869.2 L856.6 883.9 L856.6 898.1 L856.6 912.6 L856.6 927.3 L845.5 925.5 L834.5 924.6 L823.5 923.4 L812.3 921.4 L795.2 921.4 L777.5 920.6 L760.1 919.3 L743.3 919.3 L729.5 920.6 L715.3 920.6 L702.2 921.4 L688.4 922.5 L670.3 922.3 L652.1 922.3 L633.5 921.4 L615.4 921.4 L598.1 920.7 L596.3 910.5 L598.4 896.3 L601.3 882.5 L603.4 868.3 L604.1 855.5 L604.7 843 L605.3 830.2 L605.9 816 L606.5 801.3 L606.5 785 L606.5 768.3 L607.4 751.2 L606.5 733.9 L606.5 716 L606.5 699 L606.6 685 L606.7 677.3 L608.6 670.1 L611.3 664.8 L619.5 662.4 L627.4 662.4 L636.3 663.4 L644.3 664.3 L652.7 664.6 L658 664.5 L663.5 664.3 L668.5 664.1 L673 663.9 L678 663.6 L684 663.1 L690 662.6 L694.1 661.7 L699.7 662.4 L707.4 664.1 L708.3 669.4 L706.9 675.6 L704.5 682.9 L701.6 692.3 L699.4 703.3 L696.3 713.4 L693.2 723.1 L693.6 738.2 L694.4 753.2 L694.4 768.8 L694.4 783.3 L693.6 795.3 L692.2 806.1 L690.3 817.5 L689.3 827.8 L701.6 858.6 L704.5 866.3 L707.4 875.5 L710.5 883.2 L717.2 886.1 L724.2 889.2 L731.4 893.3 L738.2 896.4 L748.3 891.6 L757.4 885.6 L766.4 880.3 L776 875.5 L782 863.5 L789.2 851.4 L796.5 839.4 L802.5 827.3 L803.7 809.8 L805.2 792 L806.8 774.8 L807.6 755 L808.5 736.3 L808.3 720 L808 705 L807.8 694 L807.6 683 L807.5 671.3 L805.5 659 L803.2 647.5 L802 635 L800.8 623.5 L790 623 L780 622.7 L770 622.5 L757 622.7 L745 622.5 L732 622 L718 621.8 L705 621.5 L693 621.3 L681 621.3 L670 621.2 L659 621.1 L649 621.1 L639 621.1 L630 621.1 L620.2 621.1 L620.2 610 L620.5 599 L621 588 L621 577 L620.5 566 L620 555 L619.5 544 L619 532 L619.5 520 L620 508 L620.5 497 L621 486 L621.3 476 L621.5 471.5 L621.5 463.4Z" fill="none" stroke="#4a5e78" stroke-width="0.9"/><path d="M626 453h5v5h-5zM633 452h5v5h-5zM640 452h5v5h-5zM646 451h5v5h-5zM655 450h5v5h-5zM664 449h5v5h-5zM672 448h5v5h-5zM681 447h5v5h-5zM686 439h5v5h-5zM692 443h5v5h-5zM691 452h5v5h-5zM695 456h5v5h-5zM695 463h5v5h-5zM695 470h5v5h-5zM695 478h5v5h-5zM695 485h5v5h-5zM696 492h5v5h-5zM696 500h5v5h-5zM697 509h5v5h-5zM698 516h5v5h-5zM698 523h5v5h-5zM700 530h5v5h-5zM701 538h5v5h-5zM702 544h5v5h-5zM705 551h5v5h-5zM707 556h5v5h-5zM709 562h5v5h-5zM712 567h5v5h-5zM714 573h5v5h-5zM717 578h5v5h-5zM720 584h5v5h-5zM724 589h5v5h-5zM728 589h5v5h-5zM734 588h5v5h-5zM739 588h5v5h-5zM744 588h5v5h-5zM748 585h5v5h-5zM753 582h5v5h-5zM758 578h5v5h-5zM762 575h5v5h-5zM766 572h5v5h-5zM770 566h5v5h-5zM773 561h5v5h-5zM777 556h5v5h-5zM780 549h5v5h-5zM784 542h5v5h-5zM788 535h5v5h-5zM792 528h5v5h-5zM793 520h5v5h-5zM794 513h5v5h-5zM794 505h5v5h-5zM793 498h5v5h-5zM793 490h5v5h-5zM792 482h5v5h-5zM791 476h5v5h-5zM791 469h5v5h-5zM791 462h5v5h-5zM791 456h5v5h-5zM792 450h5v5h-5zM792 446h5v5h-5zM796 448h5v5h-5zM801 450h5v5h-5zM806 452h5v5h-5zM811 454h5v5h-5zM816 457h5v5h-5zM822 459h5v5h-5zM828 458h5v5h-5zM834 457h5v5h-5zM838 456h5v5h-5zM844 455h5v5h-5zM850 456h5v5h-5zM856 458h5v5h-5zM860 460h5v5h-5zM862 463h5v5h-5zM863 476h5v5h-5zM862 490h5v5h-5zM862 503h5v5h-5zM860 516h5v5h-5zM860 530h5v5h-5zM859 544h5v5h-5zM858 556h5v5h-5zM858 570h5v5h-5zM858 581h5v5h-5zM858 594h5v5h-5zM858 605h5v5h-5zM857 616h5v5h-5zM856 627h5v5h-5zM856 638h5v5h-5zM856 648h5v5h-5zM855 658h5v5h-5zM855 668h5v5h-5zM855 678h5v5h-5zM855 686h5v5h-5zM855 694h5v5h-5zM855 704h5v5h-5zM856 714h5v5h-5zM856 724h5v5h-5zM856 734h5v5h-5zM856 744h5v5h-5zM856 754h5v5h-5zM856 764h5v5h-5zM856 775h5v5h-5zM855 786h5v5h-5zM854 796h5v5h-5zM853 806h5v5h-5zM853 818h5v5h-5zM853 830h5v5h-5zM853 842h5v5h-5zM853 854h5v5h-5zM854 867h5v5h-5zM854 881h5v5h-5zM854 896h5v5h-5zM854 910h5v5h-5zM854 925h5v5h-5zM843 923h5v5h-5zM832 922h5v5h-5zM821 921h5v5h-5zM810 919h5v5h-5zM793 919h5v5h-5zM775 918h5v5h-5zM758 917h5v5h-5zM741 917h5v5h-5zM727 918h5v5h-5zM713 918h5v5h-5zM700 919h5v5h-5zM686 920h5v5h-5zM668 920h5v5h-5zM650 920h5v5h-5zM631 919h5v5h-5zM613 919h5v5h-5zM596 918h5v5h-5zM594 908h5v5h-5zM596 894h5v5h-5zM599 880h5v5h-5zM601 866h5v5h-5zM602 853h5v5h-5zM602 840h5v5h-5zM603 828h5v5h-5zM603 814h5v5h-5zM604 799h5v5h-5zM604 782h5v5h-5zM604 766h5v5h-5zM605 749h5v5h-5zM604 731h5v5h-5zM604 714h5v5h-5zM604 696h5v5h-5zM604 682h5v5h-5zM604 675h5v5h-5zM606 668h5v5h-5zM609 662h5v5h-5zM617 660h5v5h-5zM625 660h5v5h-5zM634 661h5v5h-5zM642 662h5v5h-5zM650 662h5v5h-5zM656 662h5v5h-5zM661 662h5v5h-5zM666 662h5v5h-5zM670 661h5v5h-5zM676 661h5v5h-5zM682 661h5v5h-5zM688 660h5v5h-5zM692 659h5v5h-5zM697 660h5v5h-5zM705 662h5v5h-5zM706 667h5v5h-5zM704 673h5v5h-5zM702 680h5v5h-5zM699 690h5v5h-5zM697 701h5v5h-5zM694 711h5v5h-5zM691 721h5v5h-5zM691 736h5v5h-5zM692 751h5v5h-5zM692 766h5v5h-5zM692 781h5v5h-5zM691 793h5v5h-5zM690 804h5v5h-5zM688 815h5v5h-5zM687 825h5v5h-5zM699 856h5v5h-5zM702 864h5v5h-5zM705 873h5v5h-5zM708 881h5v5h-5zM715 884h5v5h-5zM722 887h5v5h-5zM729 891h5v5h-5zM736 894h5v5h-5zM746 889h5v5h-5zM755 883h5v5h-5zM764 878h5v5h-5zM774 873h5v5h-5zM780 861h5v5h-5zM787 849h5v5h-5zM794 837h5v5h-5zM800 825h5v5h-5zM801 807h5v5h-5zM803 790h5v5h-5zM804 772h5v5h-5zM805 752h5v5h-5zM806 734h5v5h-5zM806 718h5v5h-5zM806 702h5v5h-5zM805 692h5v5h-5zM805 680h5v5h-5zM805 669h5v5h-5zM803 656h5v5h-5zM801 645h5v5h-5zM800 632h5v5h-5zM798 621h5v5h-5zM788 620h5v5h-5zM778 620h5v5h-5zM768 620h5v5h-5zM754 620h5v5h-5zM742 620h5v5h-5zM730 620h5v5h-5zM716 619h5v5h-5zM702 619h5v5h-5zM690 619h5v5h-5zM678 619h5v5h-5zM668 619h5v5h-5zM656 619h5v5h-5zM646 619h5v5h-5zM636 619h5v5h-5zM628 619h5v5h-5zM618 619h5v5h-5zM618 608h5v5h-5zM618 596h5v5h-5zM618 586h5v5h-5zM618 574h5v5h-5zM618 564h5v5h-5zM618 552h5v5h-5zM617 542h5v5h-5zM616 530h5v5h-5zM617 518h5v5h-5zM618 506h5v5h-5zM618 494h5v5h-5zM618 484h5v5h-5zM619 474h5v5h-5zM619 469h5v5h-5zM619 461h5v5h-5zM686 461h5v5h-5zM695 830h5v5h-5zM699 840h5v5h-5zM687 838h5v5h-5zM691 849h5v5h-5zM609 925h5v5h-5zM598 927h5v5h-5zM602 915h5v5h-5z" fill="#2482c5"/><path d="M621.5 450.5L625.3 459.5H617.7Z" fill="#2482c5"/></svg>
<div class="a" style="left:0px;top:1040px;width:1920px;height:40px;background:linear-gradient(90deg,#1f1d1c 0%,#1f1e1c 25%,#262420 45%,#2d2c28 55%,#2e2b27 65%,#37322f 70%,#36373a 75%,#3a3836 85%,#3d3c3a 88.5%,#2c3b37 90.8%,#26352f 95%,#1f2d28 100%);"></div>
<div class="a" style="left:48px;top:1041px;width:344px;height:39px;background:#f2f2f2;"></div>
<div class="a" style="left:48px;top:1040px;width:344px;height:1px;background:#cfcfcf;"></div>
<svg style="left:16px;top:1052px" width="16" height="16" viewBox="0 0 16 16"><path d="M0 2.3L6.5 1.4V7.6H0ZM7.3 1.3L16 0V7.6H7.3ZM0 8.4H6.5V14.6L0 13.7ZM7.3 8.4H16V16L7.3 14.7Z" fill="#fff"/></svg>
<svg style="left:60px;top:1052px" width="17" height="17" viewBox="0 0 17 17"><circle cx="10.3" cy="6.3" r="5.3" fill="none" stroke="#222" stroke-width="1.5"/><path d="M6.5 10.3L.8 16" stroke="#222" stroke-width="1.6"/></svg>
<svg style="left:0px;top:0px" width="1920" height="1080" viewBox="0 0 1920 1080"><path d="M330.7 1069C330.9 1073 331.3 1077 331.6 1080" stroke="#5a9c50" stroke-width="2" fill="none"/><path d="M344.8 1059C345.2 1066 347 1074 348.4 1080" stroke="#5a9c50" stroke-width="2.2" fill="none"/><path d="M354.4 1066C353.6 1071 352.6 1076 352.2 1080" stroke="#5a9c50" stroke-width="2.4" fill="none"/><path d="M332 1079C333 1074.5 337 1072.5 339.5 1073.5C339 1077 336 1079.5 332 1079Z" fill="#6aaa60"/><path d="M346.5 1073.5C344 1073.8 340.8 1072 340 1069.3C343 1068.5 346 1070 346.5 1073.5Z" fill="#6aaa60"/><path d="M353.5 1079.5C354.5 1075 358.5 1073 361.5 1074C361 1077.5 358 1080 353.5 1079.5Z" fill="#6aaa60"/><g transform="translate(329.7 1061.3) rotate(-2) scale(0.971 1.025)"><path d="M-7 -5.5C-7.2 -7.5 -5 -8.3 -3.6 -7L-2.3 -5.8C-1.6 -8.6 1.6 -8.6 2.3 -5.8L3.6 -7C5 -8.3 7.2 -7.5 7 -5.5C7.6 1 6.2 8 0 8C-6.2 8 -7.6 1 -7 -5.5Z" fill="#e23a3c"/><path d="M-7 -5.5C-7.2 -7.5 -5 -8.3 -3.6 -7C-4.5 -2 -4 4 -1.5 7.8C-6.6 7 -7.6 1 -7 -5.5Z" fill="#c22b31" opacity=".8"/><path d="M1.5 -5C3 -1 3.2 4 1.5 7.6C5.2 6.6 6.6 2 6.2 -4C5 -5.5 3 -5.8 1.5 -5Z" fill="#f4524f" opacity=".85"/></g><g transform="translate(343 1053.2) rotate(-3) scale(0.821 0.781)"><path d="M-7 -5.5C-7.2 -7.5 -5 -8.3 -3.6 -7L-2.3 -5.8C-1.6 -8.6 1.6 -8.6 2.3 -5.8L3.6 -7C5 -8.3 7.2 -7.5 7 -5.5C7.6 1 6.2 8 0 8C-6.2 8 -7.6 1 -7 -5.5Z" fill="#e23a3c"/><path d="M-7 -5.5C-7.2 -7.5 -5 -8.3 -3.6 -7C-4.5 -2 -4 4 -1.5 7.8C-6.6 7 -7.6 1 -7 -5.5Z" fill="#c22b31" opacity=".8"/><path d="M1.5 -5C3 -1 3.2 4 1.5 7.6C5.2 6.6 6.6 2 6.2 -4C5 -5.5 3 -5.8 1.5 -5Z" fill="#f4524f" opacity=".85"/></g><g transform="translate(358.6 1057.8) rotate(14) scale(1.086 1.062)"><path d="M-7 -5.5C-7.2 -7.5 -5 -8.3 -3.6 -7L-2.3 -5.8C-1.6 -8.6 1.6 -8.6 2.3 -5.8L3.6 -7C5 -8.3 7.2 -7.5 7 -5.5C7.6 1 6.2 8 0 8C-6.2 8 -7.6 1 -7 -5.5Z" fill="#e23a3c"/><path d="M-7 -5.5C-7.2 -7.5 -5 -8.3 -3.6 -7C-4.5 -2 -4 4 -1.5 7.8C-6.6 7 -7.6 1 -7 -5.5Z" fill="#c22b31" opacity=".8"/><path d="M1.5 -5C3 -1 3.2 4 1.5 7.6C5.2 6.6 6.6 2 6.2 -4C5 -5.5 3 -5.8 1.5 -5Z" fill="#f4524f" opacity=".85"/></g><path d="M363.5 1041L369.3 1043.5L364.5 1048Z" fill="#f6c7a0"/><path d="M370 1045.3L376 1048.3L370.5 1053.5Z" fill="#7cc455"/><path d="M377.6 1049.3L383.3 1051.8L378.8 1057Z" fill="#d93a4c"/><path d="M384.4 1051.5L391.5 1053.5L387 1058.5Z" fill="#f5bb4e"/><circle cx="318" cy="1050.7" r="2" fill="#e4b84a"/><circle cx="381" cy="1072.8" r="1.9" fill="#7fb8e0"/><path d="M374 1061.5l1.1 2.3 2.4 1-2.4 1-1.1 2.4-1.1-2.4-2.4-1 2.4-1z" fill="#d070e0"/></svg>
<div class="a" style="left:316px;top:1040px;width:76px;height:1px;background:#d8d8d8;"></div>
<svg style="left:407px;top:1052px" width="17" height="17" viewBox="0 0 17 17"><circle cx="8.5" cy="8.5" r="6.6" fill="none" stroke="#fff" stroke-width="2.2"/></svg>
<svg style="left:455px;top:1052px" width="17" height="17" viewBox="0 0 17 17"><path d="M1 1.5H11M1 15.5H11M14.3 1V6M14.3 8.5V16" stroke="#fff" stroke-width="1.4"/><rect x="2" y="4.5" width="8" height="8" fill="none" stroke="#fff" stroke-width="1.4"/><rect x="13.3" y="5.7" width="2.4" height="3" fill="#fff"/></svg>
<svg style="left:0px;top:0px" width="1920" height="1080" viewBox="0 0 1920 1080"><defs><linearGradient id="eg" x1="0" y1="0" x2="1" y2="1"><stop offset="0" stop-color="#35c1f1"/><stop offset=".5" stop-color="#1b8ad6"/><stop offset="1" stop-color="#0c5aa6"/></linearGradient><linearGradient id="eg2" x1="0" y1="1" x2="1" y2="0"><stop offset="0" stop-color="#1da35a"/><stop offset="1" stop-color="#7fdc58"/></linearGradient></defs><circle cx="515" cy="1060" r="12" fill="url(#eg)"/><path d="M503.3 1058C505 1050 512 1047.5 517 1048C523 1048.6 527 1053 527 1058C527 1062 523.5 1064 520.5 1064C517 1064 516 1062 517.5 1060C519 1057 515 1053.5 511 1055C507 1056.5 504.5 1061 507 1066C504 1064 502.8 1061 503.3 1058Z" fill="url(#eg2)"/><path d="M509 1060C509 1066 514 1071 521 1069.5C517 1072.5 510 1072 506.5 1067.5C504.5 1064.5 505 1059 509 1056.5C509.5 1057.5 509 1058.5 509 1060Z" fill="#0a4a8c" opacity=".85"/><path d="M552 1050H561L563 1052H575.5V1069H552Z" fill="#e8a820"/><path d="M552 1054H575.5V1069.5H552Z" fill="#fcd462"/><path d="M557 1063H570.5V1069.5H557Z" fill="#4a90d6"/><path d="M559.5 1065.5H568V1069.5H559.5Z" fill="#fcd462"/><path d="M601 1056L612.5 1048.5L624 1056V1070H601Z" fill="#1a78c8"/><path d="M601 1056L612.5 1064L624 1056V1070H601Z" fill="#35a4ec"/><path d="M601 1070L612.5 1061.5L624 1070Z" fill="#2490e0"/><path d="M656 1053V1051a5 5 0 0 1 10 0V1053" fill="none" stroke="#35a4ec" stroke-width="1.6"/><rect x="650.5" y="1053" width="21.5" height="18" rx="2" fill="#f4f4f4"/><rect x="656" y="1057.5" width="4.6" height="4.6" fill="#f25022"/><rect x="661.8" y="1057.5" width="4.6" height="4.6" fill="#7fba00"/><rect x="656" y="1063.3" width="4.6" height="4.6" fill="#00a4ef"/><rect x="661.8" y="1063.3" width="4.6" height="4.6" fill="#ffb900"/><circle cx="710.5" cy="1060" r="11.5" fill="#1e78c8"/><path d="M700 1063C704 1059.5 709 1059.5 713 1062C716 1063.8 719 1063.5 721.5 1061.5C719 1067 713 1068 709 1066C706 1064.5 703 1063.5 700 1063Z" fill="#fff"/><path d="M706 1056.5l3-2 2.5 1.5 3-2.2M712 1053.5l2.5-1.8 2.5 1.5" stroke="#fff" stroke-width="1.2" fill="none"/><circle cx="759.5" cy="1060" r="11.5" fill="#e33b2e"/><path d="M759.5 1060L749.6 1054.2A11.5 11.5 0 0 0 757 1071.2L761.5 1063.5Z" fill="#2da94f"/><path d="M759.5 1060L764.5 1068.5L757 1071.2A11.5 11.5 0 0 0 770.3 1056H760Z" fill="#fbc116"/><circle cx="759.5" cy="1060" r="5.3" fill="#fff"/><circle cx="759.5" cy="1060" r="4.2" fill="#4285f4"/><rect x="797.5" y="1048.5" width="22.5" height="23" rx="3" fill="#2a2aa0"/><path d="M801 1053H816.5" stroke="#fff" stroke-width="1.8"/><path d="M803.5 1066L808.7 1056L814 1066Z" fill="#fff"/><path d="M800 1067.5H817.5" stroke="#7ad0f0" stroke-width="2"/><path d="M850 1054L861 1049.5L866 1051V1069L861 1070.5L850 1066.5L860.5 1067.5V1053L854.5 1055V1063.5L850 1066.5Z" fill="#e03c1e"/><path d="M861 1049.5L866 1051V1069L861 1070.5Z" fill="#b02a12"/><circle cx="906.7" cy="1060" r="11.5" fill="#2aa3dc"/><path d="M899.5 1060L913.5 1054.3L911.3 1066.2L907 1063L905 1065.3L904.6 1061.8L910.5 1056.5L903.2 1061.2Z" fill="#fff"/><circle cx="955.5" cy="1060" r="9.5" fill="#1ea5ec"/><circle cx="949.5" cy="1054" r="5.5" fill="#1ea5ec"/><circle cx="961.5" cy="1066" r="5.5" fill="#1ea5ec"/><rect x="982" y="1047" width="46" height="33" fill="#5e5c54"/><rect x="982" y="1078" width="46" height="2" fill="#bdb897"/><circle cx="1004.8" cy="1060" r="11.6" fill="#12370e" stroke="#8cc66a" stroke-width="1.6"/><path d="M996.5 1056.5L1000.5 1052.5L1008.5 1059.5L1004 1063.5Z" fill="#f4f4ec"/><path d="M1004.8 1064.2L1009.2 1060.2L1010.5 1066Z" fill="#fff"/><path d="M1001.5 1053.5L1007.5 1061" stroke="#12370e" stroke-width=".9"/></svg>
<svg style="left:0px;top:0px" width="1920" height="1080" viewBox="0 0 1920 1080"><circle cx="1449.5" cy="1056" r="5" fill="#f6c544"/><path d="M1447 1066.5a4.2 4.2 0 0 1 .8-8.3a5.6 5.6 0 0 1 10.6 1.2a3.6 3.6 0 0 1 .3 7.1Z" fill="#dfe6ee"/><path d="M1611.5 1063L1616.8 1057.5L1622 1063" fill="none" stroke="#fff" stroke-width="1.4"/><path d="M1633.5 1057.5H1636.5L1640.5 1054V1067L1636.5 1063.5H1633.5Z" fill="none" stroke="#fff" stroke-width="1.2"/><path d="M1642.8 1057.5a4 4 0 0 1 0 6M1644.8 1055.3a7 7 0 0 1 0 10.4M1646.8 1053.3a10 10 0 0 1 0 14.4" fill="none" stroke="#fff" stroke-width="1.1"/><rect x="1660" y="1056" width="7.5" height="8.5" rx="1.5" fill="none" stroke="#fff" stroke-width="1.2"/><path d="M1667.5 1059L1670.5 1057.3V1063.2L1667.5 1061.5" fill="none" stroke="#fff" stroke-width="1.1"/><path d="M1661.5 1053.5a4.5 2 0 0 1 7 0M1661.5 1067a4.5 2 0 0 0 7 0" fill="none" stroke="#fff" stroke-width="1.1"/><rect x="1686" y="1056.5" width="11" height="7.5" fill="none" stroke="#fff" stroke-width="1.2"/><path d="M1688 1067.5H1696M1692 1064V1067.5" stroke="#fff" stroke-width="1.2"/><rect x="1681" y="1054" width="4.8" height="11" fill="#3a3836" stroke="#fff" stroke-width="1.1"/><path d="M1683.4 1065V1067.5H1687" fill="none" stroke="#fff" stroke-width="1.1"/><rect x="1701" y="1040" width="31.5" height="40" fill="#474b48"/><path d="M1716 1061.5L1721.5 1053.5L1724 1055L1718.8 1063.2L1715.8 1064.3Z" fill="none" stroke="#fff" stroke-width="1.2"/><path d="M1709.5 1066.5C1708.5 1063 1711 1059.5 1713.5 1061C1716 1062.5 1713 1067 1711.5 1066.5C1710 1066 1713 1063.5 1716.5 1064.5C1720 1065.5 1722 1063 1723.5 1062" fill="none" stroke="#fff" stroke-width="1.1"/><rect x="1737.5" y="1053.5" width="22" height="11.5" rx="1" fill="none" stroke="#fff" stroke-width="1.2"/><path d="M1740 1056.5h17M1740 1059h17" stroke="#fff" stroke-width="1" stroke-dasharray="1.2 1.2"/><path d="M1742.5 1062h12" stroke="#fff" stroke-width="1.1"/><path d="M1879.3 1051.5H1894.5V1063H1889.5L1886.5 1066.8V1063H1879.3Z" fill="none" stroke="#fff" stroke-width="1.3"/></svg>
<span class="t" style="left:25px;top:5.00px;font-size:12px;color:#999999;transform:scaleX(0.9667);">CorelDRAW 2019 - Unbenannt-1*</span>
<span class="t" style="left:9.2px;top:25.75px;font-size:12.5px;color:#111;transform:scaleX(0.9172);"><u>D</u>atei</span>
<span class="t" style="left:55.3px;top:25.75px;font-size:12.5px;color:#111;transform:scaleX(0.9250);"><u>B</u>earbeiten</span>
<span class="t" style="left:130.3px;top:25.75px;font-size:12.5px;color:#111;transform:scaleX(0.9683);"><u>A</u>nsicht</span>
<span class="t" style="left:189.2px;top:25.75px;font-size:12.5px;color:#111;transform:scaleX(0.9421);"><u>L</u>ayout</span>
<span class="t" style="left:244.7px;top:25.75px;font-size:12.5px;color:#111;transform:scaleX(0.9444);">Ob<u>j</u>ekt</span>
<span class="t" style="left:298.3px;top:25.75px;font-size:12.5px;color:#111;transform:scaleX(0.9154);"><u>E</u>ffekte</span>
<span class="t" style="left:353px;top:25.75px;font-size:12.5px;color:#111;transform:scaleX(0.9556);">Bi<u>t</u>maps</span>
<span class="t" style="left:416px;top:25.75px;font-size:12.5px;color:#111;transform:scaleX(0.9130);">Te<u>x</u>t</span>
<span class="t" style="left:457px;top:25.75px;font-size:12.5px;color:#111;transform:scaleX(0.9000);"><u>T</u>abelle</span>
<span class="t" style="left:512px;top:25.75px;font-size:12.5px;color:#111;transform:scaleX(0.8857);">E<u>x</u>tras</span>
<span class="t" style="left:562px;top:25.75px;font-size:12.5px;color:#111;transform:scaleX(0.9048);"><u>F</u>enster</span>
<span class="t" style="left:619px;top:25.75px;font-size:12.5px;color:#111;transform:scaleX(1.0000);"><u>H</u>ilfe</span>
<span class="t" style="left:436.7px;top:52.75px;font-size:12.5px;color:#1a1a1a;transform:scaleX(0.8520);">75%</span>
<span class="t" style="left:688.3px;top:52.75px;font-size:12.5px;color:#1a1a1a;transform:scaleX(0.9474);">Ausrich<u>t</u>en an</span>
<span class="t" style="left:859px;top:52.75px;font-size:12.5px;color:#1a1a1a;transform:scaleX(0.9125);">Starten</span>
<span class="t" style="left:8px;top:89.75px;font-size:12.5px;color:#1a1a1a;transform:scaleX(0.9355);">Rechteckig</span>
<span class="t" style="left:833.3px;top:89.75px;font-size:12.5px;color:#1a1a1a;transform:scaleX(0.9353);">Knoten reduzieren</span>
<span class="t" style="left:971px;top:89.75px;font-size:12.5px;color:#1a1a1a;transform:scaleX(0.9286);">0</span>
<span class="t" style="left:58px;top:121.75px;font-size:12.5px;color:#1a1a1a;transform:scaleX(0.9809);">Willkommensbildschirm</span>
<span class="t" style="left:214px;top:121.75px;font-size:12.5px;color:#0b2a45;transform:scaleX(0.9740);">Unbenannt-1*</span>
<span class="t" style="left:102.5px;top:967.05px;font-size:12.5px;color:#b0b0b0;transform:scaleX(1.0366);">1 von 1</span>
<span class="t" style="left:218.7px;top:965.75px;font-size:12.5px;color:#1a1a1a;transform:scaleX(0.8205);">Seite 1</span>
<span class="t" style="left:597.5px;top:986.00px;font-size:12px;color:#b4b4b4;font-style:italic;transform:scaleX(0.9637);">Farben (oder Objekte) hierher ziehen,</span>
<span class="t" style="left:796.2px;top:986.00px;font-size:12px;color:#b4b4b4;font-style:italic;transform:scaleX(0.9747);">um diese Farben mit dem Dokument zu speichern</span>
<span class="t" style="left:36.5px;top:1016.05px;font-size:12.5px;color:#111;transform:scaleX(0.9474);">Doppelklicken auf das Hilfsmittel w&auml;hlt alle Knoten des aktiven Objekts aus;</span>
<span class="t" style="left:436.2px;top:1016.05px;font-size:12.5px;color:#111;transform:scaleX(0.9571);">Umschalt + Klicken erm&ouml;glicht Mehrfachauswahl;</span>
<span class="t" style="left:702px;top:1016.05px;font-size:12.5px;color:#111;transform:scaleX(0.9500);">Doppelklicken auf eine Kurve f&uuml;gt einen Knoten hinzu;</span>
<span class="t" style="left:991.2px;top:1016.05px;font-size:12.5px;color:#111;transform:scaleX(0.9528);">Doppelklicken auf einen Knoten entfernt diesen.</span>
<span class="t" style="left:1267px;top:1016.05px;font-size:12.5px;color:#111;transform:scaleX(0.9135);">Kurve: 264 Knoten</span>
<span class="t" style="left:1477px;top:1015.25px;font-size:12.5px;color:#111;transform:scaleX(0.9062);">Keine</span>
<span class="t" style="left:1676px;top:1015.50px;font-size:12px;color:#111;transform:scaleX(0.9320);">C:0 M:0 Y:0 K:100&nbsp; 0,567 pt</span>
<span class="t" style="left:1576.4px;top:123.05px;font-size:12.5px;color:#1a1a1a;transform:scaleX(0.9326);">Objekte</span>
<span class="t" style="left:1575px;top:154.25px;font-size:12.5px;color:#444;transform:scaleX(0.9143);">Suche</span>
<span class="t" style="left:1658.3px;top:183.45px;font-size:12.5px;color:#1a1a1a;font-weight:bold;transform:scaleX(0.9500);">Seite 1</span>
<span class="t" style="left:1710px;top:183.45px;font-size:12.5px;color:#1a1a1a;transform:scaleX(0.8511);">Ebene 1</span>
<span class="t" style="left:1601.8px;top:213.25px;font-size:12.5px;color:#1a1a1a;font-weight:bold;transform:scaleX(0.9300);">Seite 1</span>
<span class="t" style="left:1629px;top:239.25px;font-size:12.5px;color:#1a1a1a;transform:scaleX(0.9537);">Hilfslinien</span>
<span class="t" style="left:1629px;top:265.25px;font-size:12.5px;color:#1a1a1a;font-weight:bold;transform:scaleX(0.9062);">Ebene 1</span>
<span class="t" style="left:1638px;top:291.25px;font-size:12.5px;color:#1a1a1a;transform:scaleX(0.8939);">Kurve</span>
<span class="t" style="left:1638px;top:317.25px;font-size:12.5px;color:#1a1a1a;transform:scaleX(0.8939);">Kurve</span>
<span class="t" style="left:1602px;top:343.25px;font-size:12.5px;color:#1a1a1a;font-weight:bold;transform:scaleX(0.9662);">Master-Seite</span>
<span class="t" style="left:1629px;top:369.25px;font-size:12.5px;color:#1a1a1a;transform:scaleX(0.9355);">Hilfslinien (alle Seiten)</span>
<span class="t" style="left:1629px;top:395.25px;font-size:12.5px;color:#1a1a1a;transform:scaleX(0.9457);">Desktop</span>
<span class="t" style="left:1638px;top:421.25px;font-size:12.5px;color:#c4c4c4;transform:scaleX(0.9487);">Bitmap</span>
<span class="t" style="left:1629px;top:447.25px;font-size:12.5px;color:#1a1a1a;transform:scaleX(0.9941);">Dokumentgitter</span>
<span class="t" style="left:1888.5px;top:187.3px;font-size:12.5px;color:#1a1a1a;transform-origin:50% 50%;transform:translate(-50%,-50%) rotate(90deg) scaleX(0.9419);">Objekte</span>
<span class="t" style="left:1888.5px;top:296px;font-size:12.5px;color:#1a1a1a;transform-origin:50% 50%;transform:translate(-50%,-50%) rotate(90deg) scaleX(0.9241);">Eigenschaften</span>
<span class="t" style="left:399px;top:50.25px;font-size:8.5px;color:#2b2b2b;transform:scaleX(0.9706);">PDF</span>
<span class="t" style="left:7.5px;top:407.00px;font-size:24px;color:#2b2b2b;transform:scaleX(1.0625);">A</span>
<span class="t" style="left:88.46px;top:141.05px;font-size:9.5px;color:#8a8a8a;transform:scaleX(1.0400);">8</span>
<span class="t" style="left:145.12px;top:141.05px;font-size:9.5px;color:#8a8a8a;transform:scaleX(1.0400);">6</span>
<span class="t" style="left:201.78px;top:141.05px;font-size:9.5px;color:#8a8a8a;transform:scaleX(1.0400);">4</span>
<span class="t" style="left:258.44px;top:141.05px;font-size:9.5px;color:#8a8a8a;transform:scaleX(1.0400);">2</span>
<span class="t" style="left:315.09999999999997px;top:141.05px;font-size:9.5px;color:#8a8a8a;transform:scaleX(1.0400);">0</span>
<span class="t" style="left:371.75999999999993px;top:141.05px;font-size:9.5px;color:#8a8a8a;transform:scaleX(1.0400);">2</span>
<span class="t" style="left:428.41999999999996px;top:141.05px;font-size:9.5px;color:#8a8a8a;transform:scaleX(1.0400);">4</span>
<span class="t" style="left:485.08px;top:141.05px;font-size:9.5px;color:#8a8a8a;transform:scaleX(1.0400);">6</span>
<span class="t" style="left:541.7399999999999px;top:141.05px;font-size:9.5px;color:#8a8a8a;transform:scaleX(1.0400);">8</span>
<span class="t" style="left:595.7999999999998px;top:141.05px;font-size:9.5px;color:#8a8a8a;transform:scaleX(0.9455);">10</span>
<span class="t" style="left:652.4599999999998px;top:141.05px;font-size:9.5px;color:#8a8a8a;transform:scaleX(0.9455);">12</span>
<span class="t" style="left:709.1199999999999px;top:141.05px;font-size:9.5px;color:#8a8a8a;transform:scaleX(0.9455);">14</span>
<span class="t" style="left:765.7799999999999px;top:141.05px;font-size:9.5px;color:#8a8a8a;transform:scaleX(0.9455);">16</span>
<span class="t" style="left:822.4399999999998px;top:141.05px;font-size:9.5px;color:#8a8a8a;transform:scaleX(0.9455);">18</span>
<span class="t" style="left:879.0999999999998px;top:141.05px;font-size:9.5px;color:#8a8a8a;transform:scaleX(0.9455);">20</span>
<span class="t" style="left:935.7599999999999px;top:141.05px;font-size:9.5px;color:#8a8a8a;transform:scaleX(0.9455);">22</span>
<span class="t" style="left:992.4199999999998px;top:141.05px;font-size:9.5px;color:#8a8a8a;transform:scaleX(0.9455);">24</span>
<span class="t" style="left:1049.08px;top:141.05px;font-size:9.5px;color:#8a8a8a;transform:scaleX(0.9455);">26</span>
<span class="t" style="left:1105.7399999999998px;top:141.05px;font-size:9.5px;color:#8a8a8a;transform:scaleX(0.9455);">28</span>
<span class="t" style="left:1162.3999999999999px;top:141.05px;font-size:9.5px;color:#8a8a8a;transform:scaleX(0.9455);">30</span>
<span class="t" style="left:1219.06px;top:141.05px;font-size:9.5px;color:#8a8a8a;transform:scaleX(0.9455);">32</span>
<span class="t" style="left:1275.7199999999998px;top:141.05px;font-size:9.5px;color:#8a8a8a;transform:scaleX(0.9455);">34</span>
<span class="t" style="left:1332.3799999999997px;top:141.05px;font-size:9.5px;color:#8a8a8a;transform:scaleX(0.9455);">36</span>
<span class="t" style="left:1389.04px;top:141.05px;font-size:9.5px;color:#8a8a8a;transform:scaleX(0.9455);">38</span>
<span class="t" style="left:1445.6999999999998px;top:141.05px;font-size:9.5px;color:#8a8a8a;transform:scaleX(0.9455);">40</span>
<span class="t" style="left:1515px;top:141.25px;font-size:9.5px;color:#8a8a8a;transform:scaleX(1.0444);">Zentimeter</span>
<span class="t" style="left:39.5px;top:234.8px;font-size:9.5px;color:#8a8a8a;transform-origin:50% 50%;transform:translate(-50%,-50%) rotate(-90deg) scaleX(0.9455);">36</span>
<span class="t" style="left:39.5px;top:291.46000000000004px;font-size:9.5px;color:#8a8a8a;transform-origin:50% 50%;transform:translate(-50%,-50%) rotate(-90deg) scaleX(0.9455);">34</span>
<span class="t" style="left:39.5px;top:348.12px;font-size:9.5px;color:#8a8a8a;transform-origin:50% 50%;transform:translate(-50%,-50%) rotate(-90deg) scaleX(0.9455);">32</span>
<span class="t" style="left:39.5px;top:404.78px;font-size:9.5px;color:#8a8a8a;transform-origin:50% 50%;transform:translate(-50%,-50%) rotate(-90deg) scaleX(0.9455);">30</span>
<span class="t" style="left:39.5px;top:461.44px;font-size:9.5px;color:#8a8a8a;transform-origin:50% 50%;transform:translate(-50%,-50%) rotate(-90deg) scaleX(0.9455);">28</span>
<span class="t" style="left:39.5px;top:518.0999999999999px;font-size:9.5px;color:#8a8a8a;transform-origin:50% 50%;transform:translate(-50%,-50%) rotate(-90deg) scaleX(0.9455);">26</span>
<span class="t" style="left:39.5px;top:574.76px;font-size:9.5px;color:#8a8a8a;transform-origin:50% 50%;transform:translate(-50%,-50%) rotate(-90deg) scaleX(0.9455);">24</span>
<span class="t" style="left:39.5px;top:631.4200000000001px;font-size:9.5px;color:#8a8a8a;transform-origin:50% 50%;transform:translate(-50%,-50%) rotate(-90deg) scaleX(0.9455);">22</span>
<span class="t" style="left:39.5px;top:688.0799999999999px;font-size:9.5px;color:#8a8a8a;transform-origin:50% 50%;transform:translate(-50%,-50%) rotate(-90deg) scaleX(0.9455);">20</span>
<span class="t" style="left:39.5px;top:744.74px;font-size:9.5px;color:#8a8a8a;transform-origin:50% 50%;transform:translate(-50%,-50%) rotate(-90deg) scaleX(0.9455);">18</span>
<span class="t" style="left:39.5px;top:801.3999999999999px;font-size:9.5px;color:#8a8a8a;transform-origin:50% 50%;transform:translate(-50%,-50%) rotate(-90deg) scaleX(0.9455);">16</span>
<span class="t" style="left:39.5px;top:858.06px;font-size:9.5px;color:#8a8a8a;transform-origin:50% 50%;transform:translate(-50%,-50%) rotate(-90deg) scaleX(0.9455);">14</span>
<span class="t" style="left:39.5px;top:914.72px;font-size:9.5px;color:#8a8a8a;transform-origin:50% 50%;transform:translate(-50%,-50%) rotate(-90deg) scaleX(0.9455);">12</span>
<span class="t" style="left:88px;top:1053.00px;font-size:15px;color:#3a3a3a;transform:scaleX(0.9730);">Zur Suche Text hier eingeben</span>
<span class="t" style="left:951.5px;top:1053.20px;font-size:14px;color:#fff;font-weight:bold;transform:scaleX(0.8889);">S</span>
<span class="t" style="left:1473.7px;top:1053.55px;font-size:14.5px;color:#fff;transform:scaleX(0.8531);">12&deg;C</span>
<span class="t" style="left:1511px;top:1053.55px;font-size:14.5px;color:#fff;transform:scaleX(0.9598);">Stark bew&ouml;lkt</span>
<span class="t" style="left:1772.5px;top:1053.80px;font-size:12px;color:#fff;transform:scaleX(0.8480);">DEU</span>
<span class="t" style="left:1820px;top:1044.70px;font-size:12px;color:#fff;transform:scaleX(0.9000);">06:55</span>
<span class="t" style="left:1807.5px;top:1062.70px;font-size:12px;color:#fff;transform:scaleX(0.8867);">10.06.2022</span>
<svg style="left:0;top:0" width="1920" height="1080" viewBox="0 0 1920 1080"><g fill="none" stroke="#e85a10" stroke-width="4.2" stroke-linecap="round" stroke-linejoin="round"><path d="M144.7 180.8C143.5 172 140.5 155 139.4 140C138.6 128 139.3 117 141.5 110.3L146.5 109.6L148.5 115"/><path d="M136.2 114L141.5 110.3"/><path d="M179.2 244.2C172 242.5 155 237 144.2 232.5C134 228 123 216 116.7 210.8C110 206.5 90 200 78.3 195C66 190 46 181 39.2 176.7L35.5 168.5"/><path d="M49.5 170C45 168 39 167.5 35.5 168.5C35.5 178 36.5 188 36.2 196.5" stroke-width="4.8"/></g><g fill="none" stroke="#3ad61e" stroke-width="4.6" stroke-linecap="round" stroke-linejoin="round"><path d="M262.9 168.5C266 163 270 156 281.7 142.5C288 135 294 128 296.8 121.7C298.5 117 298.8 113 298.3 111.3L294.2 105"/><path d="M281.7 113.3L294.2 105C298 111 302 120 306.7 130.5" stroke-width="4.4"/><path d="M341 110.7C349 112.5 357 113.5 365 113.9C375 114.5 386 114.9 396.3 114.9L420.2 114.9" stroke-width="4.8"/><path d="M734.4 124.2C739 123.5 745 121 749.3 119C754 117 758 114.5 761.4 112.5" stroke-width="3.8"/><path d="M819.6 115.5C819.3 128 819.2 140 819.2 148.8C819.2 160 819 172 819.2 183.1C819.6 195 821 204 822.6 212.9C824.3 222 826.5 231 828.3 238.1L832.5 253.7" stroke-width="3.6"/><path d="M947.5 170.1C948 165 949 161 950.9 157.9C953.5 153 957 149 961.3 144.2C966 138 971 131 975 125.8L983 114.4" stroke-width="3.8"/><path d="M953.2 115.1C962 114.8 972 114 983 114.4C985 118 985.5 135 985.3 144.2C982.5 135 980 124 978.4 116.7" stroke-width="4"/><path d="M1112.5 86.9C1109 102 1105 120 1101 137.3C1097 155 1093 175 1089.6 192.3" stroke-width="3.4"/></g></svg>
</body></html>
